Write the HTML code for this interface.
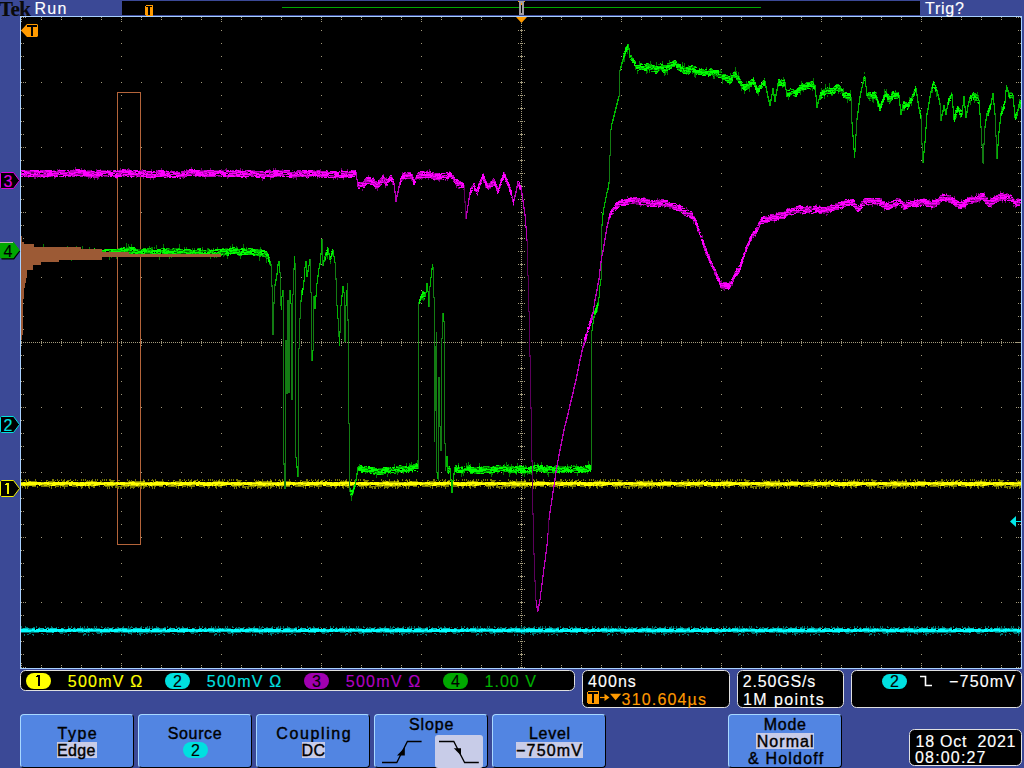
<!DOCTYPE html>
<html><head><meta charset="utf-8"><style>
html,body{margin:0;padding:0;}
body{width:1024px;height:768px;background:#3b4996;position:relative;overflow:hidden;font-family:"Liberation Sans",sans-serif;}
.a{position:absolute;white-space:pre;-webkit-text-stroke:0.15px currentColor;}
.k{-webkit-text-stroke:0.4px #000;}
.btn{position:absolute;top:714px;width:112px;height:52px;background:#5285e2;border-top:1px solid #a8d8ff;border-left:1px solid #a8d8ff;border-right:1px solid #000;border-bottom:1px solid #000;border-radius:4px;box-sizing:content-box;}
</style></head><body>
<svg width="1024" height="768" viewBox="0 0 1024 768" style="position:absolute;left:0;top:0" shape-rendering="crispEdges">
<defs><pattern id="py" patternUnits="userSpaceOnUse" x="21" y="479" width="127" height="11"><path fill="#ffff00" d="M2 3h2v1h-2zM6 3h14v1h-14zM23 3h5v1h-5zM32 3h15v1h-15zM48 3h9v1h-9zM59 3h4v1h-4zM64 3h16v1h-16zM83 3h9v1h-9zM95 3h3v1h-3zM99 3h5v1h-5zM108 3h6v1h-6zM0 4h127v1h-127zM0 5h16v1h-16zM17 5h4v1h-4zM26 5h2v1h-2zM31 5h13v1h-13zM48 5h3v1h-3zM52 5h13v1h-13zM67 5h3v1h-3zM73 5h11v1h-11zM86 5h8v1h-8zM96 5h8v1h-8zM110 5h8v1h-8zM120 5h3v1h-3zM124 5h3v1h-3zM2 6h2v1h-2zM18 6h1v1h-1zM30 6h4v1h-4zM48 6h3v1h-3zM55 6h8v1h-8zM64 6h1v1h-1zM66 6h2v1h-2zM72 6h3v1h-3zM107 6h1v1h-1zM115 6h2v1h-2z"/><path fill="#c4c400" d="M5 2h1v1h-1zM8 2h2v1h-2zM37 2h1v1h-1zM45 2h3v1h-3zM50 2h2v1h-2zM70 2h2v1h-2zM111 2h2v1h-2zM119 2h1v1h-1zM122 2h2v1h-2zM0 3h2v1h-2zM4 3h2v1h-2zM20 3h3v1h-3zM28 3h4v1h-4zM47 3h1v1h-1zM57 3h2v1h-2zM63 3h1v1h-1zM80 3h3v1h-3zM92 3h3v1h-3zM98 3h1v1h-1zM104 3h4v1h-4zM114 3h13v1h-13zM16 5h1v1h-1zM21 5h5v1h-5zM28 5h3v1h-3zM44 5h4v1h-4zM51 5h1v1h-1zM65 5h2v1h-2zM70 5h3v1h-3zM84 5h2v1h-2zM94 5h2v1h-2zM104 5h6v1h-6zM118 5h2v1h-2zM123 5h1v1h-1zM0 6h2v1h-2zM4 6h11v1h-11zM23 6h3v1h-3zM28 6h2v1h-2zM34 6h1v1h-1zM39 6h4v1h-4zM63 6h1v1h-1zM65 6h1v1h-1zM68 6h4v1h-4zM75 6h2v1h-2zM83 6h10v1h-10zM95 6h1v1h-1zM102 6h5v1h-5zM108 6h7v1h-7zM117 6h9v1h-9z"/><path fill="#787800" d="M0 0h1v1h-1zM4 0h1v1h-1zM7 0h1v1h-1zM14 0h1v1h-1zM31 0h2v1h-2zM36 0h1v1h-1zM40 0h1v1h-1zM43 0h1v1h-1zM49 0h1v1h-1zM54 0h1v1h-1zM60 0h1v1h-1zM62 0h1v1h-1zM64 0h1v1h-1zM71 0h1v1h-1zM74 0h1v1h-1zM76 0h1v1h-1zM81 0h1v1h-1zM83 0h1v1h-1zM85 0h1v1h-1zM88 0h2v1h-2zM106 0h1v1h-1zM114 0h1v1h-1zM122 0h1v1h-1zM0 1h1v1h-1zM3 1h3v1h-3zM7 1h1v1h-1zM14 1h1v1h-1zM20 1h1v1h-1zM25 1h2v1h-2zM31 1h2v1h-2zM34 1h1v1h-1zM36 1h1v1h-1zM38 1h1v1h-1zM40 1h1v1h-1zM42 1h2v1h-2zM46 1h4v1h-4zM52 1h1v1h-1zM54 1h1v1h-1zM56 1h1v1h-1zM60 1h1v1h-1zM62 1h1v1h-1zM64 1h1v1h-1zM66 1h1v1h-1zM68 1h1v1h-1zM70 1h2v1h-2zM74 1h1v1h-1zM76 1h1v1h-1zM79 1h1v1h-1zM81 1h1v1h-1zM83 1h1v1h-1zM85 1h1v1h-1zM88 1h6v1h-6zM97 1h2v1h-2zM106 1h1v1h-1zM108 1h1v1h-1zM110 1h1v1h-1zM114 1h1v1h-1zM119 1h1v1h-1zM122 1h2v1h-2zM7 2h1v1h-1zM10 2h6v1h-6zM25 2h1v1h-1zM27 2h7v1h-7zM41 2h3v1h-3zM65 2h5v1h-5zM72 2h4v1h-4zM79 2h2v1h-2zM89 2h4v1h-4zM107 2h4v1h-4zM113 2h6v1h-6zM120 2h2v1h-2zM19 6h4v1h-4zM26 6h2v1h-2zM35 6h4v1h-4zM43 6h4v1h-4zM51 6h4v1h-4zM77 6h2v1h-2zM93 6h2v1h-2zM100 6h2v1h-2zM1 7h1v1h-1zM3 7h2v1h-2zM6 7h2v1h-2zM11 7h4v1h-4zM16 7h1v1h-1zM20 7h9v1h-9zM30 7h1v1h-1zM34 7h4v1h-4zM39 7h1v1h-1zM41 7h6v1h-6zM51 7h6v1h-6zM59 7h3v1h-3zM64 7h1v1h-1zM67 7h2v1h-2zM70 7h4v1h-4zM78 7h1v1h-1zM82 7h1v1h-1zM84 7h5v1h-5zM90 7h2v1h-2zM94 7h14v1h-14zM109 7h12v1h-12zM122 7h5v1h-5zM1 8h1v1h-1zM4 8h1v1h-1zM6 8h1v1h-1zM16 8h1v1h-1zM28 8h1v1h-1zM30 8h1v1h-1zM34 8h1v1h-1zM39 8h1v1h-1zM43 8h1v1h-1zM56 8h1v1h-1zM60 8h2v1h-2zM67 8h2v1h-2zM72 8h2v1h-2zM86 8h1v1h-1zM88 8h1v1h-1zM91 8h1v1h-1zM94 8h4v1h-4zM99 8h2v1h-2zM103 8h1v1h-1zM105 8h1v1h-1zM109 8h5v1h-5zM117 8h1v1h-1zM120 8h1v1h-1zM122 8h2v1h-2zM4 9h1v1h-1zM6 9h1v1h-1zM30 9h1v1h-1zM43 9h1v1h-1zM60 9h1v1h-1zM68 9h1v1h-1zM86 9h1v1h-1zM88 9h1v1h-1zM97 9h1v1h-1zM99 9h2v1h-2zM103 9h1v1h-1zM109 9h1v1h-1zM112 9h1v1h-1zM120 9h1v1h-1zM122 9h1v1h-1z"/></pattern><pattern id="pc" patternUnits="userSpaceOnUse" x="21" y="626" width="131" height="11"><path fill="#00ffff" d="M0 3h7v1h-7zM11 3h3v1h-3zM15 3h4v1h-4zM22 3h4v1h-4zM27 3h16v1h-16zM46 3h3v1h-3zM50 3h2v1h-2zM53 3h1v1h-1zM55 3h7v1h-7zM65 3h7v1h-7zM75 3h6v1h-6zM82 3h5v1h-5zM88 3h3v1h-3zM93 3h7v1h-7zM101 3h5v1h-5zM110 3h19v1h-19zM0 4h131v1h-131zM0 5h10v1h-10zM13 5h23v1h-23zM37 5h5v1h-5zM44 5h6v1h-6zM52 5h3v1h-3zM61 5h1v1h-1zM63 5h3v1h-3zM67 5h1v1h-1zM79 5h10v1h-10zM90 5h7v1h-7zM102 5h9v1h-9zM112 5h16v1h-16zM130 5h1v1h-1z"/><path fill="#00c0c0" d="M2 2h6v1h-6zM11 2h3v1h-3zM17 2h6v1h-6zM25 2h3v1h-3zM29 2h7v1h-7zM40 2h2v1h-2zM47 2h3v1h-3zM52 2h2v1h-2zM56 2h6v1h-6zM67 2h2v1h-2zM70 2h1v1h-1zM74 2h1v1h-1zM83 2h1v1h-1zM88 2h4v1h-4zM97 2h9v1h-9zM112 2h9v1h-9zM124 2h2v1h-2zM128 2h1v1h-1zM7 3h4v1h-4zM19 3h3v1h-3zM43 3h3v1h-3zM49 3h1v1h-1zM52 3h1v1h-1zM54 3h1v1h-1zM62 3h3v1h-3zM72 3h3v1h-3zM81 3h1v1h-1zM87 3h1v1h-1zM91 3h2v1h-2zM100 3h1v1h-1zM106 3h4v1h-4zM10 5h3v1h-3zM36 5h1v1h-1zM42 5h2v1h-2zM50 5h2v1h-2zM55 5h6v1h-6zM62 5h1v1h-1zM66 5h1v1h-1zM68 5h11v1h-11zM89 5h1v1h-1zM97 5h5v1h-5zM111 5h1v1h-1zM128 5h2v1h-2zM31 6h2v1h-2zM79 6h2v1h-2zM107 6h1v1h-1zM116 6h1v1h-1z"/><path fill="#006e6e" d="M0 0h1v1h-1zM4 0h1v1h-1zM15 0h1v1h-1zM24 0h1v1h-1zM30 0h1v1h-1zM47 0h1v1h-1zM50 0h1v1h-1zM59 0h1v1h-1zM63 0h1v1h-1zM66 0h1v1h-1zM73 0h1v1h-1zM75 0h1v1h-1zM80 0h1v1h-1zM102 0h1v1h-1zM107 0h1v1h-1zM110 0h1v1h-1zM120 0h1v1h-1zM126 0h1v1h-1zM128 0h1v1h-1zM0 1h1v1h-1zM4 1h3v1h-3zM12 1h2v1h-2zM15 1h1v1h-1zM18 1h1v1h-1zM24 1h1v1h-1zM26 1h2v1h-2zM30 1h2v1h-2zM35 1h1v1h-1zM37 1h1v1h-1zM43 1h1v1h-1zM47 1h1v1h-1zM50 1h1v1h-1zM53 1h1v1h-1zM59 1h1v1h-1zM61 1h1v1h-1zM63 1h1v1h-1zM66 1h1v1h-1zM73 1h1v1h-1zM75 1h1v1h-1zM80 1h2v1h-2zM84 1h1v1h-1zM86 1h2v1h-2zM91 1h2v1h-2zM96 1h2v1h-2zM101 1h2v1h-2zM107 1h1v1h-1zM109 1h3v1h-3zM114 1h2v1h-2zM119 1h2v1h-2zM122 1h1v1h-1zM124 1h3v1h-3zM128 1h1v1h-1zM0 2h2v1h-2zM8 2h3v1h-3zM28 2h1v1h-1zM42 2h1v1h-1zM54 2h1v1h-1zM62 2h5v1h-5zM69 2h1v1h-1zM71 2h3v1h-3zM75 2h4v1h-4zM84 2h4v1h-4zM94 2h3v1h-3zM106 2h4v1h-4zM126 2h2v1h-2zM129 2h2v1h-2zM0 6h18v1h-18zM25 6h6v1h-6zM38 6h8v1h-8zM57 6h6v1h-6zM65 6h4v1h-4zM75 6h4v1h-4zM81 6h8v1h-8zM93 6h6v1h-6zM100 6h7v1h-7zM108 6h7v1h-7zM117 6h14v1h-14zM8 7h2v1h-2zM20 7h2v1h-2zM39 7h3v1h-3zM49 7h1v1h-1zM63 7h2v1h-2zM71 7h1v1h-1zM76 7h3v1h-3zM80 7h2v1h-2zM89 7h1v1h-1zM107 7h4v1h-4zM118 7h4v1h-4zM125 7h2v1h-2zM130 7h1v1h-1zM3 8h1v1h-1zM6 8h2v1h-2zM11 8h2v1h-2zM22 8h1v1h-1zM26 8h1v1h-1zM31 8h1v1h-1zM43 8h1v1h-1zM47 8h1v1h-1zM62 8h3v1h-3zM67 8h1v1h-1zM72 8h1v1h-1zM80 8h1v1h-1zM84 8h1v1h-1zM100 8h1v1h-1zM103 8h1v1h-1zM110 8h1v1h-1zM116 8h1v1h-1zM118 8h2v1h-2zM123 8h1v1h-1zM3 9h1v1h-1zM12 9h1v1h-1zM47 9h1v1h-1zM62 9h1v1h-1zM67 9h1v1h-1zM80 9h1v1h-1zM100 9h1v1h-1zM103 9h1v1h-1zM119 9h1v1h-1z"/></pattern><pattern id="pm" patternUnits="userSpaceOnUse" x="0" y="0" width="113" height="23"><path fill="#ff00ff" d="M0 0h3v1h-3zM10 0h3v1h-3zM18 0h2v1h-2zM26 0h9v1h-9zM42 0h16v1h-16zM60 0h2v1h-2zM70 0h13v1h-13zM89 0h2v1h-2zM98 0h4v1h-4zM108 0h3v1h-3zM0 1h3v1h-3zM5 1h2v1h-2zM9 1h3v1h-3zM22 1h5v1h-5zM30 1h1v1h-1zM34 1h2v1h-2zM42 1h2v1h-2zM49 1h4v1h-4zM56 1h3v1h-3zM63 1h9v1h-9zM73 1h9v1h-9zM88 1h12v1h-12zM2 2h2v1h-2zM14 2h2v1h-2zM21 2h2v1h-2zM35 2h7v1h-7zM54 2h2v1h-2zM67 2h2v1h-2zM71 2h10v1h-10zM88 2h5v1h-5zM95 2h3v1h-3zM99 2h4v1h-4zM109 2h3v1h-3zM0 3h12v1h-12zM24 3h4v1h-4zM30 3h6v1h-6zM40 3h3v1h-3zM47 3h1v1h-1zM50 3h5v1h-5zM61 3h2v1h-2zM66 3h3v1h-3zM71 3h3v1h-3zM86 3h3v1h-3zM94 3h1v1h-1zM102 3h3v1h-3zM108 3h5v1h-5zM12 4h4v1h-4zM18 4h3v1h-3zM24 4h10v1h-10zM39 4h8v1h-8zM49 4h2v1h-2zM60 4h3v1h-3zM66 4h8v1h-8zM78 4h2v1h-2zM90 4h6v1h-6zM5 5h1v1h-1zM14 5h2v1h-2zM22 5h3v1h-3zM28 5h3v1h-3zM57 5h17v1h-17zM77 5h5v1h-5zM85 5h3v1h-3zM106 5h5v1h-5zM3 6h5v1h-5zM10 6h18v1h-18zM39 6h3v1h-3zM54 6h10v1h-10zM66 6h7v1h-7zM77 6h13v1h-13zM91 6h8v1h-8zM103 6h5v1h-5zM0 7h5v1h-5zM14 7h1v1h-1zM17 7h4v1h-4zM26 7h2v1h-2zM39 7h12v1h-12zM53 7h11v1h-11zM68 7h5v1h-5zM87 7h3v1h-3zM98 7h4v1h-4zM107 7h3v1h-3zM112 7h1v1h-1zM0 8h6v1h-6zM9 8h2v1h-2zM17 8h5v1h-5zM32 8h6v1h-6zM46 8h5v1h-5zM56 8h2v1h-2zM61 8h5v1h-5zM68 8h5v1h-5zM76 8h10v1h-10zM88 8h6v1h-6zM106 8h3v1h-3zM1 9h4v1h-4zM9 9h4v1h-4zM16 9h2v1h-2zM21 9h4v1h-4zM30 9h10v1h-10zM45 9h8v1h-8zM58 9h7v1h-7zM67 9h3v1h-3zM76 9h11v1h-11zM94 9h7v1h-7zM106 9h2v1h-2zM0 10h10v1h-10zM12 10h8v1h-8zM22 10h5v1h-5zM34 10h9v1h-9zM46 10h10v1h-10zM78 10h8v1h-8zM91 10h3v1h-3zM101 10h9v1h-9zM10 11h7v1h-7zM25 11h4v1h-4zM38 11h3v1h-3zM49 11h3v1h-3zM59 11h2v1h-2zM77 11h3v1h-3zM83 11h7v1h-7zM95 11h6v1h-6zM106 11h7v1h-7zM3 12h2v1h-2zM16 12h5v1h-5zM27 12h4v1h-4zM47 12h5v1h-5zM53 12h4v1h-4zM61 12h5v1h-5zM69 12h3v1h-3zM73 12h2v1h-2zM83 12h1v1h-1zM92 12h2v1h-2zM100 12h6v1h-6zM109 12h4v1h-4zM10 13h15v1h-15zM30 13h8v1h-8zM48 13h5v1h-5zM71 13h2v1h-2zM83 13h8v1h-8zM96 13h7v1h-7zM108 13h5v1h-5zM2 14h6v1h-6zM10 14h4v1h-4zM28 14h3v1h-3zM33 14h1v1h-1zM41 14h2v1h-2zM47 14h8v1h-8zM63 14h8v1h-8zM74 14h6v1h-6zM82 14h12v1h-12zM96 14h6v1h-6zM110 14h3v1h-3zM2 15h7v1h-7zM11 15h14v1h-14zM28 15h6v1h-6zM38 15h2v1h-2zM41 15h8v1h-8zM54 15h5v1h-5zM61 15h5v1h-5zM76 15h1v1h-1zM91 15h1v1h-1zM108 15h5v1h-5zM0 16h5v1h-5zM9 16h13v1h-13zM26 16h16v1h-16zM49 16h4v1h-4zM56 16h10v1h-10zM77 16h15v1h-15zM98 16h12v1h-12zM0 17h1v1h-1zM6 17h5v1h-5zM17 17h8v1h-8zM28 17h7v1h-7zM37 17h3v1h-3zM43 17h1v1h-1zM48 17h3v1h-3zM53 17h5v1h-5zM60 17h8v1h-8zM73 17h1v1h-1zM87 17h3v1h-3zM97 17h6v1h-6zM107 17h6v1h-6zM2 18h4v1h-4zM9 18h4v1h-4zM21 18h4v1h-4zM47 18h15v1h-15zM92 18h4v1h-4zM104 18h1v1h-1zM4 19h4v1h-4zM13 19h1v1h-1zM20 19h5v1h-5zM28 19h5v1h-5zM39 19h1v1h-1zM43 19h1v1h-1zM50 19h3v1h-3zM74 19h2v1h-2zM81 19h4v1h-4zM86 19h7v1h-7zM95 19h3v1h-3zM106 19h6v1h-6zM9 20h5v1h-5zM38 20h2v1h-2zM49 20h22v1h-22zM74 20h4v1h-4zM89 20h2v1h-2zM94 20h3v1h-3zM102 20h6v1h-6zM111 20h2v1h-2zM0 21h3v1h-3zM7 21h3v1h-3zM11 21h3v1h-3zM16 21h5v1h-5zM32 21h4v1h-4zM39 21h5v1h-5zM46 21h3v1h-3zM55 21h7v1h-7zM67 21h11v1h-11zM88 21h2v1h-2zM104 21h3v1h-3zM112 21h1v1h-1zM0 22h17v1h-17zM22 22h8v1h-8zM47 22h1v1h-1zM56 22h8v1h-8zM68 22h3v1h-3zM74 22h2v1h-2zM81 22h16v1h-16zM100 22h2v1h-2z"/><path fill="#c000c0" d="M5 0h5v1h-5zM13 0h5v1h-5zM23 0h3v1h-3zM35 0h7v1h-7zM62 0h6v1h-6zM83 0h6v1h-6zM93 0h5v1h-5zM107 0h1v1h-1zM3 1h2v1h-2zM14 1h3v1h-3zM31 1h3v1h-3zM36 1h6v1h-6zM44 1h5v1h-5zM53 1h3v1h-3zM59 1h4v1h-4zM82 1h6v1h-6zM106 1h7v1h-7zM0 2h2v1h-2zM9 2h2v1h-2zM16 2h2v1h-2zM23 2h12v1h-12zM42 2h6v1h-6zM51 2h3v1h-3zM56 2h7v1h-7zM69 2h2v1h-2zM81 2h5v1h-5zM98 2h1v1h-1zM106 2h3v1h-3zM112 2h1v1h-1zM12 3h9v1h-9zM28 3h2v1h-2zM36 3h4v1h-4zM55 3h6v1h-6zM63 3h3v1h-3zM74 3h10v1h-10zM95 3h7v1h-7zM5 4h3v1h-3zM16 4h2v1h-2zM34 4h3v1h-3zM47 4h2v1h-2zM54 4h3v1h-3zM63 4h3v1h-3zM80 4h2v1h-2zM86 4h4v1h-4zM96 4h7v1h-7zM108 4h3v1h-3zM6 5h4v1h-4zM16 5h3v1h-3zM25 5h3v1h-3zM36 5h2v1h-2zM39 5h4v1h-4zM44 5h2v1h-2zM55 5h2v1h-2zM74 5h3v1h-3zM88 5h3v1h-3zM95 5h11v1h-11zM111 5h2v1h-2zM8 6h2v1h-2zM28 6h3v1h-3zM38 6h1v1h-1zM44 6h5v1h-5zM50 6h4v1h-4zM90 6h1v1h-1zM99 6h4v1h-4zM111 6h2v1h-2zM12 7h2v1h-2zM15 7h2v1h-2zM28 7h5v1h-5zM51 7h2v1h-2zM75 7h4v1h-4zM83 7h4v1h-4zM90 7h6v1h-6zM102 7h5v1h-5zM110 7h2v1h-2zM6 8h2v1h-2zM11 8h5v1h-5zM25 8h7v1h-7zM38 8h8v1h-8zM54 8h2v1h-2zM58 8h1v1h-1zM66 8h2v1h-2zM73 8h3v1h-3zM94 8h5v1h-5zM104 8h2v1h-2zM109 8h4v1h-4zM0 9h1v1h-1zM6 9h3v1h-3zM13 9h3v1h-3zM18 9h3v1h-3zM40 9h5v1h-5zM65 9h2v1h-2zM70 9h6v1h-6zM91 9h3v1h-3zM10 10h2v1h-2zM27 10h7v1h-7zM43 10h3v1h-3zM56 10h9v1h-9zM68 10h10v1h-10zM86 10h5v1h-5zM94 10h7v1h-7zM110 10h1v1h-1zM6 11h4v1h-4zM17 11h5v1h-5zM29 11h2v1h-2zM34 11h4v1h-4zM41 11h8v1h-8zM54 11h5v1h-5zM61 11h16v1h-16zM80 11h3v1h-3zM90 11h5v1h-5zM101 11h5v1h-5zM5 12h3v1h-3zM21 12h6v1h-6zM75 12h1v1h-1zM78 12h5v1h-5zM87 12h5v1h-5zM96 12h4v1h-4zM108 12h1v1h-1zM2 13h5v1h-5zM25 13h2v1h-2zM38 13h10v1h-10zM53 13h18v1h-18zM73 13h5v1h-5zM91 13h5v1h-5zM0 14h2v1h-2zM8 14h2v1h-2zM17 14h2v1h-2zM23 14h4v1h-4zM34 14h7v1h-7zM43 14h4v1h-4zM55 14h3v1h-3zM71 14h3v1h-3zM80 14h2v1h-2zM94 14h2v1h-2zM103 14h4v1h-4zM0 15h2v1h-2zM9 15h2v1h-2zM25 15h3v1h-3zM34 15h4v1h-4zM40 15h1v1h-1zM49 15h2v1h-2zM59 15h2v1h-2zM66 15h10v1h-10zM77 15h6v1h-6zM86 15h5v1h-5zM92 15h11v1h-11zM22 16h4v1h-4zM42 16h7v1h-7zM71 16h6v1h-6zM92 16h6v1h-6zM1 17h2v1h-2zM12 17h5v1h-5zM25 17h3v1h-3zM40 17h3v1h-3zM44 17h4v1h-4zM51 17h2v1h-2zM68 17h5v1h-5zM75 17h12v1h-12zM90 17h7v1h-7zM0 18h2v1h-2zM6 18h3v1h-3zM13 18h8v1h-8zM25 18h11v1h-11zM42 18h2v1h-2zM45 18h2v1h-2zM67 18h3v1h-3zM73 18h3v1h-3zM78 18h7v1h-7zM90 18h2v1h-2zM96 18h5v1h-5zM105 18h2v1h-2zM109 18h4v1h-4zM8 19h5v1h-5zM14 19h2v1h-2zM25 19h3v1h-3zM33 19h6v1h-6zM40 19h3v1h-3zM47 19h3v1h-3zM58 19h5v1h-5zM66 19h3v1h-3zM85 19h1v1h-1zM93 19h2v1h-2zM103 19h3v1h-3zM112 19h1v1h-1zM0 20h9v1h-9zM21 20h17v1h-17zM40 20h7v1h-7zM78 20h3v1h-3zM86 20h3v1h-3zM91 20h3v1h-3zM97 20h5v1h-5zM3 21h4v1h-4zM10 21h1v1h-1zM21 21h4v1h-4zM26 21h1v1h-1zM36 21h3v1h-3zM44 21h2v1h-2zM49 21h4v1h-4zM78 21h10v1h-10zM93 21h11v1h-11zM107 21h2v1h-2zM17 22h5v1h-5zM30 22h11v1h-11zM44 22h3v1h-3zM51 22h5v1h-5zM76 22h5v1h-5zM97 22h3v1h-3zM102 22h7v1h-7zM110 22h3v1h-3z"/><path fill="#700070" d="M3 0h2v1h-2zM20 0h3v1h-3zM58 0h2v1h-2zM68 0h2v1h-2zM91 0h2v1h-2zM104 0h3v1h-3zM111 0h2v1h-2zM7 1h2v1h-2zM12 1h2v1h-2zM17 1h5v1h-5zM27 1h3v1h-3zM100 1h6v1h-6zM11 2h3v1h-3zM18 2h3v1h-3zM48 2h3v1h-3zM63 2h4v1h-4zM93 2h2v1h-2zM103 2h3v1h-3zM43 3h4v1h-4zM48 3h2v1h-2zM69 3h2v1h-2zM89 3h5v1h-5zM0 4h5v1h-5zM37 4h2v1h-2zM57 4h3v1h-3zM74 4h4v1h-4zM82 4h4v1h-4zM103 4h5v1h-5zM111 4h2v1h-2zM0 5h5v1h-5zM10 5h4v1h-4zM31 5h5v1h-5zM43 5h1v1h-1zM51 5h4v1h-4zM82 5h3v1h-3zM91 5h4v1h-4zM31 6h3v1h-3zM37 6h1v1h-1zM42 6h2v1h-2zM64 6h2v1h-2zM73 6h4v1h-4zM108 6h3v1h-3zM5 7h7v1h-7zM21 7h5v1h-5zM33 7h6v1h-6zM73 7h2v1h-2zM96 7h2v1h-2zM16 8h1v1h-1zM51 8h3v1h-3zM59 8h2v1h-2zM86 8h2v1h-2zM99 8h5v1h-5zM5 9h1v1h-1zM25 9h5v1h-5zM53 9h5v1h-5zM87 9h4v1h-4zM101 9h5v1h-5zM108 9h5v1h-5zM20 10h2v1h-2zM0 11h6v1h-6zM31 11h3v1h-3zM52 11h2v1h-2zM8 12h8v1h-8zM31 12h9v1h-9zM43 12h4v1h-4zM52 12h1v1h-1zM66 12h3v1h-3zM76 12h2v1h-2zM94 12h2v1h-2zM106 12h2v1h-2zM7 13h3v1h-3zM27 13h3v1h-3zM78 13h5v1h-5zM14 14h3v1h-3zM19 14h4v1h-4zM27 14h1v1h-1zM31 14h2v1h-2zM102 14h1v1h-1zM107 14h3v1h-3zM51 15h3v1h-3zM83 15h3v1h-3zM104 15h4v1h-4zM5 16h4v1h-4zM53 16h3v1h-3zM66 16h5v1h-5zM110 16h3v1h-3zM11 17h1v1h-1zM35 17h2v1h-2zM58 17h2v1h-2zM74 17h1v1h-1zM36 18h6v1h-6zM44 18h1v1h-1zM62 18h3v1h-3zM70 18h3v1h-3zM76 18h2v1h-2zM85 18h5v1h-5zM101 18h3v1h-3zM0 19h4v1h-4zM16 19h4v1h-4zM44 19h3v1h-3zM53 19h5v1h-5zM63 19h3v1h-3zM69 19h5v1h-5zM14 20h7v1h-7zM47 20h2v1h-2zM71 20h3v1h-3zM81 20h5v1h-5zM14 21h2v1h-2zM25 21h1v1h-1zM27 21h5v1h-5zM53 21h2v1h-2zM62 21h4v1h-4zM90 21h3v1h-3zM109 21h3v1h-3zM41 22h3v1h-3zM64 22h4v1h-4zM109 22h1v1h-1z"/></pattern><pattern id="pg" patternUnits="userSpaceOnUse" x="0" y="0" width="109" height="29"><path fill="#00ff00" d="M6 0h2v1h-2zM13 0h9v1h-9zM32 0h1v1h-1zM36 0h4v1h-4zM50 0h9v1h-9zM61 0h5v1h-5zM89 0h3v1h-3zM97 0h6v1h-6zM9 1h5v1h-5zM18 1h1v1h-1zM22 1h6v1h-6zM33 1h8v1h-8zM42 1h13v1h-13zM58 1h5v1h-5zM66 1h8v1h-8zM88 1h3v1h-3zM98 1h10v1h-10zM4 2h4v1h-4zM12 2h2v1h-2zM20 2h3v1h-3zM34 2h1v1h-1zM39 2h7v1h-7zM57 2h1v1h-1zM78 2h3v1h-3zM83 2h16v1h-16zM101 2h6v1h-6zM3 3h6v1h-6zM19 3h1v1h-1zM25 3h2v1h-2zM32 3h6v1h-6zM41 3h5v1h-5zM55 3h5v1h-5zM63 3h8v1h-8zM74 3h1v1h-1zM78 3h4v1h-4zM91 3h7v1h-7zM99 3h1v1h-1zM104 3h5v1h-5zM8 4h2v1h-2zM11 4h9v1h-9zM21 4h2v1h-2zM31 4h4v1h-4zM43 4h3v1h-3zM58 4h4v1h-4zM66 4h1v1h-1zM74 4h2v1h-2zM81 4h15v1h-15zM102 4h6v1h-6zM0 5h10v1h-10zM19 5h3v1h-3zM31 5h10v1h-10zM44 5h8v1h-8zM55 5h7v1h-7zM67 5h5v1h-5zM82 5h3v1h-3zM92 5h2v1h-2zM100 5h3v1h-3zM107 5h1v1h-1zM0 6h3v1h-3zM7 6h4v1h-4zM17 6h11v1h-11zM32 6h6v1h-6zM42 6h8v1h-8zM54 6h7v1h-7zM65 6h4v1h-4zM70 6h8v1h-8zM80 6h10v1h-10zM93 6h7v1h-7zM13 7h8v1h-8zM22 7h5v1h-5zM33 7h14v1h-14zM58 7h6v1h-6zM73 7h3v1h-3zM78 7h2v1h-2zM84 7h12v1h-12zM100 7h2v1h-2zM107 7h2v1h-2zM2 8h2v1h-2zM12 8h4v1h-4zM21 8h6v1h-6zM33 8h5v1h-5zM48 8h1v1h-1zM51 8h8v1h-8zM61 8h2v1h-2zM64 8h3v1h-3zM79 8h11v1h-11zM95 8h4v1h-4zM108 8h1v1h-1zM3 9h6v1h-6zM12 9h3v1h-3zM17 9h7v1h-7zM26 9h3v1h-3zM32 9h2v1h-2zM41 9h3v1h-3zM45 9h3v1h-3zM69 9h1v1h-1zM96 9h3v1h-3zM102 9h2v1h-2zM108 9h1v1h-1zM0 10h4v1h-4zM7 10h3v1h-3zM12 10h1v1h-1zM15 10h2v1h-2zM19 10h2v1h-2zM26 10h4v1h-4zM32 10h5v1h-5zM50 10h4v1h-4zM58 10h10v1h-10zM73 10h2v1h-2zM80 10h1v1h-1zM83 10h4v1h-4zM89 10h4v1h-4zM101 10h3v1h-3zM15 11h6v1h-6zM22 11h2v1h-2zM34 11h6v1h-6zM45 11h3v1h-3zM50 11h7v1h-7zM60 11h3v1h-3zM69 11h1v1h-1zM75 11h3v1h-3zM90 11h1v1h-1zM94 11h2v1h-2zM97 11h5v1h-5zM4 12h1v1h-1zM8 12h9v1h-9zM20 12h2v1h-2zM25 12h3v1h-3zM29 12h4v1h-4zM39 12h7v1h-7zM59 12h6v1h-6zM68 12h10v1h-10zM84 12h1v1h-1zM87 12h1v1h-1zM99 12h3v1h-3zM0 13h4v1h-4zM7 13h2v1h-2zM26 13h1v1h-1zM32 13h16v1h-16zM51 13h14v1h-14zM75 13h4v1h-4zM90 13h4v1h-4zM99 13h2v1h-2zM5 14h8v1h-8zM19 14h5v1h-5zM41 14h4v1h-4zM46 14h4v1h-4zM51 14h3v1h-3zM56 14h9v1h-9zM70 14h5v1h-5zM78 14h5v1h-5zM84 14h2v1h-2zM91 14h8v1h-8zM0 15h11v1h-11zM14 15h3v1h-3zM20 15h13v1h-13zM35 15h5v1h-5zM47 15h2v1h-2zM51 15h3v1h-3zM71 15h6v1h-6zM83 15h5v1h-5zM92 15h8v1h-8zM101 15h3v1h-3zM106 15h2v1h-2zM11 16h4v1h-4zM21 16h4v1h-4zM30 16h3v1h-3zM41 16h7v1h-7zM49 16h2v1h-2zM54 16h3v1h-3zM64 16h1v1h-1zM74 16h3v1h-3zM81 16h4v1h-4zM91 16h7v1h-7zM106 16h3v1h-3zM0 17h7v1h-7zM9 17h3v1h-3zM15 17h5v1h-5zM22 17h5v1h-5zM33 17h4v1h-4zM48 17h4v1h-4zM54 17h4v1h-4zM68 17h4v1h-4zM74 17h7v1h-7zM84 17h8v1h-8zM94 17h2v1h-2zM105 17h4v1h-4zM2 18h2v1h-2zM12 18h7v1h-7zM24 18h5v1h-5zM32 18h1v1h-1zM34 18h4v1h-4zM43 18h9v1h-9zM53 18h4v1h-4zM74 18h2v1h-2zM81 18h2v1h-2zM84 18h2v1h-2zM95 18h2v1h-2zM100 18h9v1h-9zM2 19h8v1h-8zM30 19h7v1h-7zM42 19h10v1h-10zM57 19h10v1h-10zM71 19h3v1h-3zM84 19h2v1h-2zM8 20h3v1h-3zM15 20h6v1h-6zM23 20h11v1h-11zM41 20h3v1h-3zM53 20h12v1h-12zM68 20h6v1h-6zM75 20h3v1h-3zM81 20h11v1h-11zM98 20h4v1h-4zM7 21h10v1h-10zM22 21h2v1h-2zM26 21h2v1h-2zM32 21h4v1h-4zM43 21h3v1h-3zM49 21h3v1h-3zM55 21h4v1h-4zM63 21h4v1h-4zM77 21h5v1h-5zM90 21h9v1h-9zM103 21h3v1h-3zM0 22h1v1h-1zM2 22h3v1h-3zM10 22h2v1h-2zM19 22h11v1h-11zM34 22h3v1h-3zM38 22h2v1h-2zM42 22h3v1h-3zM49 22h11v1h-11zM71 22h3v1h-3zM78 22h5v1h-5zM101 22h2v1h-2zM106 22h3v1h-3zM1 23h2v1h-2zM7 23h4v1h-4zM16 23h2v1h-2zM29 23h8v1h-8zM48 23h10v1h-10zM61 23h7v1h-7zM82 23h14v1h-14zM2 24h2v1h-2zM6 24h2v1h-2zM12 24h5v1h-5zM20 24h2v1h-2zM27 24h1v1h-1zM34 24h2v1h-2zM59 24h11v1h-11zM71 24h11v1h-11zM84 24h2v1h-2zM94 24h12v1h-12zM0 25h4v1h-4zM18 25h3v1h-3zM35 25h5v1h-5zM44 25h3v1h-3zM50 25h6v1h-6zM63 25h2v1h-2zM68 25h3v1h-3zM79 25h1v1h-1zM95 25h14v1h-14zM0 26h2v1h-2zM7 26h5v1h-5zM16 26h3v1h-3zM20 26h12v1h-12zM44 26h4v1h-4zM52 26h18v1h-18zM80 26h4v1h-4zM88 26h6v1h-6zM95 26h5v1h-5zM107 26h2v1h-2zM0 27h5v1h-5zM8 27h17v1h-17zM30 27h14v1h-14zM47 27h2v1h-2zM54 27h6v1h-6zM63 27h4v1h-4zM72 27h14v1h-14zM87 27h3v1h-3zM92 27h2v1h-2zM104 27h4v1h-4zM0 28h2v1h-2zM7 28h7v1h-7zM27 28h6v1h-6zM39 28h15v1h-15zM55 28h1v1h-1zM64 28h2v1h-2zM71 28h3v1h-3zM83 28h1v1h-1zM89 28h4v1h-4zM100 28h4v1h-4zM106 28h2v1h-2z"/><path fill="#00c000" d="M0 0h6v1h-6zM8 0h2v1h-2zM29 0h3v1h-3zM33 0h3v1h-3zM40 0h5v1h-5zM59 0h2v1h-2zM66 0h1v1h-1zM69 0h2v1h-2zM76 0h3v1h-3zM86 0h3v1h-3zM92 0h5v1h-5zM105 0h4v1h-4zM0 1h3v1h-3zM6 1h3v1h-3zM19 1h3v1h-3zM41 1h1v1h-1zM55 1h3v1h-3zM77 1h11v1h-11zM91 1h7v1h-7zM108 1h1v1h-1zM2 2h2v1h-2zM8 2h4v1h-4zM28 2h6v1h-6zM35 2h4v1h-4zM46 2h8v1h-8zM67 2h3v1h-3zM75 2h3v1h-3zM81 2h2v1h-2zM107 2h2v1h-2zM0 3h3v1h-3zM9 3h6v1h-6zM17 3h2v1h-2zM20 3h5v1h-5zM30 3h2v1h-2zM46 3h2v1h-2zM52 3h3v1h-3zM60 3h2v1h-2zM71 3h3v1h-3zM75 3h3v1h-3zM82 3h9v1h-9zM98 3h1v1h-1zM100 3h4v1h-4zM2 4h2v1h-2zM10 4h1v1h-1zM20 4h1v1h-1zM23 4h1v1h-1zM28 4h3v1h-3zM35 4h5v1h-5zM46 4h5v1h-5zM55 4h3v1h-3zM62 4h2v1h-2zM71 4h3v1h-3zM76 4h1v1h-1zM80 4h1v1h-1zM96 4h3v1h-3zM108 4h1v1h-1zM13 5h3v1h-3zM26 5h2v1h-2zM52 5h3v1h-3zM72 5h1v1h-1zM85 5h2v1h-2zM94 5h4v1h-4zM103 5h4v1h-4zM108 5h1v1h-1zM28 6h4v1h-4zM38 6h4v1h-4zM61 6h4v1h-4zM78 6h2v1h-2zM100 6h9v1h-9zM0 7h3v1h-3zM7 7h6v1h-6zM27 7h2v1h-2zM50 7h6v1h-6zM57 7h1v1h-1zM68 7h5v1h-5zM76 7h2v1h-2zM80 7h3v1h-3zM102 7h5v1h-5zM0 8h2v1h-2zM4 8h8v1h-8zM16 8h5v1h-5zM28 8h5v1h-5zM40 8h4v1h-4zM49 8h2v1h-2zM70 8h9v1h-9zM90 8h5v1h-5zM99 8h9v1h-9zM0 9h3v1h-3zM9 9h3v1h-3zM15 9h2v1h-2zM24 9h2v1h-2zM34 9h3v1h-3zM40 9h1v1h-1zM44 9h1v1h-1zM48 9h11v1h-11zM63 9h6v1h-6zM70 9h8v1h-8zM80 9h3v1h-3zM93 9h3v1h-3zM107 9h1v1h-1zM4 10h3v1h-3zM17 10h2v1h-2zM30 10h2v1h-2zM40 10h1v1h-1zM45 10h5v1h-5zM54 10h4v1h-4zM68 10h3v1h-3zM81 10h2v1h-2zM87 10h2v1h-2zM93 10h8v1h-8zM0 11h5v1h-5zM7 11h8v1h-8zM24 11h4v1h-4zM32 11h2v1h-2zM48 11h2v1h-2zM57 11h2v1h-2zM68 11h1v1h-1zM83 11h7v1h-7zM96 11h1v1h-1zM104 11h3v1h-3zM17 12h3v1h-3zM33 12h3v1h-3zM46 12h5v1h-5zM56 12h3v1h-3zM65 12h3v1h-3zM90 12h4v1h-4zM102 12h3v1h-3zM9 13h4v1h-4zM18 13h8v1h-8zM27 13h3v1h-3zM48 13h3v1h-3zM85 13h5v1h-5zM101 13h8v1h-8zM0 14h4v1h-4zM16 14h3v1h-3zM26 14h15v1h-15zM45 14h1v1h-1zM50 14h1v1h-1zM54 14h2v1h-2zM67 14h3v1h-3zM99 14h3v1h-3zM33 15h2v1h-2zM40 15h7v1h-7zM49 15h2v1h-2zM54 15h4v1h-4zM61 15h4v1h-4zM79 15h4v1h-4zM91 15h1v1h-1zM104 15h2v1h-2zM108 15h1v1h-1zM0 16h6v1h-6zM15 16h1v1h-1zM17 16h4v1h-4zM25 16h5v1h-5zM33 16h8v1h-8zM51 16h3v1h-3zM57 16h3v1h-3zM69 16h5v1h-5zM79 16h2v1h-2zM89 16h2v1h-2zM98 16h3v1h-3zM7 17h2v1h-2zM12 17h2v1h-2zM20 17h2v1h-2zM27 17h2v1h-2zM37 17h3v1h-3zM42 17h2v1h-2zM63 17h1v1h-1zM72 17h2v1h-2zM81 17h3v1h-3zM92 17h2v1h-2zM99 17h2v1h-2zM104 17h1v1h-1zM4 18h8v1h-8zM19 18h3v1h-3zM33 18h1v1h-1zM38 18h5v1h-5zM52 18h1v1h-1zM57 18h3v1h-3zM67 18h2v1h-2zM76 18h5v1h-5zM83 18h1v1h-1zM86 18h2v1h-2zM90 18h5v1h-5zM0 19h2v1h-2zM11 19h8v1h-8zM23 19h3v1h-3zM28 19h2v1h-2zM37 19h5v1h-5zM52 19h5v1h-5zM67 19h4v1h-4zM74 19h2v1h-2zM80 19h4v1h-4zM89 19h3v1h-3zM99 19h6v1h-6zM0 20h3v1h-3zM12 20h3v1h-3zM21 20h2v1h-2zM36 20h5v1h-5zM47 20h2v1h-2zM74 20h1v1h-1zM78 20h3v1h-3zM92 20h2v1h-2zM102 20h1v1h-1zM0 21h1v1h-1zM4 21h1v1h-1zM17 21h5v1h-5zM28 21h4v1h-4zM41 21h2v1h-2zM46 21h3v1h-3zM53 21h2v1h-2zM59 21h4v1h-4zM67 21h5v1h-5zM82 21h8v1h-8zM106 21h3v1h-3zM1 22h1v1h-1zM5 22h5v1h-5zM12 22h7v1h-7zM30 22h4v1h-4zM37 22h1v1h-1zM40 22h2v1h-2zM48 22h1v1h-1zM60 22h9v1h-9zM74 22h4v1h-4zM88 22h13v1h-13zM103 22h3v1h-3zM0 23h1v1h-1zM3 23h2v1h-2zM11 23h5v1h-5zM21 23h8v1h-8zM39 23h7v1h-7zM58 23h3v1h-3zM73 23h5v1h-5zM101 23h8v1h-8zM0 24h2v1h-2zM8 24h4v1h-4zM22 24h5v1h-5zM30 24h4v1h-4zM36 24h23v1h-23zM82 24h2v1h-2zM86 24h4v1h-4zM11 25h7v1h-7zM21 25h3v1h-3zM30 25h5v1h-5zM42 25h2v1h-2zM56 25h2v1h-2zM65 25h3v1h-3zM75 25h2v1h-2zM82 25h5v1h-5zM2 26h5v1h-5zM12 26h4v1h-4zM35 26h7v1h-7zM48 26h2v1h-2zM70 26h10v1h-10zM85 26h3v1h-3zM94 26h1v1h-1zM100 26h5v1h-5zM5 27h3v1h-3zM25 27h1v1h-1zM44 27h3v1h-3zM49 27h5v1h-5zM67 27h5v1h-5zM86 27h1v1h-1zM90 27h2v1h-2zM94 27h10v1h-10zM4 28h3v1h-3zM14 28h1v1h-1zM18 28h3v1h-3zM25 28h2v1h-2zM34 28h2v1h-2zM37 28h2v1h-2zM56 28h5v1h-5zM63 28h1v1h-1zM66 28h5v1h-5zM74 28h9v1h-9zM93 28h7v1h-7zM104 28h2v1h-2zM108 28h1v1h-1z"/><path fill="#006e00" d="M22 0h7v1h-7zM45 0h1v1h-1zM48 0h2v1h-2zM67 0h2v1h-2zM71 0h5v1h-5zM79 0h4v1h-4zM103 0h2v1h-2zM3 1h3v1h-3zM28 1h5v1h-5zM63 1h3v1h-3zM74 1h3v1h-3zM0 2h2v1h-2zM14 2h6v1h-6zM23 2h5v1h-5zM54 2h3v1h-3zM58 2h9v1h-9zM70 2h5v1h-5zM15 3h2v1h-2zM38 3h3v1h-3zM48 3h4v1h-4zM62 3h1v1h-1zM0 4h2v1h-2zM4 4h4v1h-4zM40 4h3v1h-3zM51 4h4v1h-4zM64 4h2v1h-2zM67 4h4v1h-4zM77 4h3v1h-3zM99 4h3v1h-3zM10 5h3v1h-3zM16 5h3v1h-3zM22 5h4v1h-4zM28 5h3v1h-3zM41 5h3v1h-3zM62 5h5v1h-5zM78 5h4v1h-4zM98 5h2v1h-2zM3 6h4v1h-4zM11 6h6v1h-6zM50 6h4v1h-4zM69 6h1v1h-1zM21 7h1v1h-1zM47 7h3v1h-3zM27 8h1v1h-1zM38 8h2v1h-2zM44 8h4v1h-4zM59 8h2v1h-2zM63 8h1v1h-1zM67 8h3v1h-3zM29 9h3v1h-3zM37 9h3v1h-3zM61 9h2v1h-2zM78 9h2v1h-2zM83 9h10v1h-10zM99 9h3v1h-3zM104 9h3v1h-3zM13 10h2v1h-2zM21 10h5v1h-5zM37 10h3v1h-3zM71 10h2v1h-2zM75 10h5v1h-5zM104 10h5v1h-5zM5 11h2v1h-2zM28 11h4v1h-4zM40 11h2v1h-2zM63 11h5v1h-5zM70 11h2v1h-2zM78 11h5v1h-5zM102 11h2v1h-2zM107 11h2v1h-2zM0 12h4v1h-4zM5 12h3v1h-3zM22 12h3v1h-3zM28 12h1v1h-1zM36 12h3v1h-3zM51 12h5v1h-5zM82 12h2v1h-2zM85 12h2v1h-2zM88 12h2v1h-2zM4 13h3v1h-3zM13 13h5v1h-5zM30 13h2v1h-2zM65 13h10v1h-10zM79 13h6v1h-6zM94 13h5v1h-5zM4 14h1v1h-1zM13 14h3v1h-3zM24 14h2v1h-2zM65 14h2v1h-2zM75 14h3v1h-3zM83 14h1v1h-1zM11 15h3v1h-3zM17 15h3v1h-3zM58 15h3v1h-3zM70 15h1v1h-1zM77 15h2v1h-2zM88 15h3v1h-3zM100 15h1v1h-1zM6 16h5v1h-5zM16 16h1v1h-1zM48 16h1v1h-1zM60 16h4v1h-4zM65 16h4v1h-4zM85 16h4v1h-4zM104 16h2v1h-2zM14 17h1v1h-1zM29 17h4v1h-4zM40 17h2v1h-2zM58 17h5v1h-5zM64 17h4v1h-4zM96 17h3v1h-3zM0 18h2v1h-2zM29 18h3v1h-3zM60 18h7v1h-7zM69 18h5v1h-5zM88 18h2v1h-2zM97 18h3v1h-3zM10 19h1v1h-1zM19 19h4v1h-4zM26 19h2v1h-2zM76 19h4v1h-4zM86 19h3v1h-3zM92 19h7v1h-7zM3 20h5v1h-5zM11 20h1v1h-1zM49 20h4v1h-4zM65 20h3v1h-3zM103 20h6v1h-6zM1 21h3v1h-3zM5 21h2v1h-2zM24 21h2v1h-2zM36 21h5v1h-5zM72 21h5v1h-5zM99 21h4v1h-4zM45 22h3v1h-3zM83 22h5v1h-5zM5 23h2v1h-2zM18 23h3v1h-3zM37 23h2v1h-2zM46 23h2v1h-2zM68 23h5v1h-5zM78 23h4v1h-4zM96 23h5v1h-5zM4 24h2v1h-2zM17 24h3v1h-3zM28 24h2v1h-2zM106 24h3v1h-3zM4 25h7v1h-7zM24 25h6v1h-6zM47 25h3v1h-3zM58 25h5v1h-5zM71 25h4v1h-4zM77 25h2v1h-2zM92 25h3v1h-3zM19 26h1v1h-1zM32 26h3v1h-3zM42 26h2v1h-2zM50 26h2v1h-2zM26 27h4v1h-4zM60 27h3v1h-3zM2 28h2v1h-2zM15 28h3v1h-3zM21 28h4v1h-4zM33 28h1v1h-1zM36 28h1v1h-1zM84 28h5v1h-5z"/></pattern></defs>
<rect x="122" y="1" width="798" height="14" fill="#000"/>
<rect x="282" y="7" width="479" height="1" fill="#00a800"/>
<rect x="20" y="16" width="1002" height="653" fill="#a8d0ff"/>
<rect x="21" y="17" width="1000" height="651" fill="#000"/>
<g stroke="#a39a7c" stroke-width="1" fill="none"><path d="M121.5 17V668" stroke-dasharray="1 12"/><path d="M221.5 17V668" stroke-dasharray="1 12"/><path d="M321.5 17V668" stroke-dasharray="1 12"/><path d="M421.5 17V668" stroke-dasharray="1 12"/><path d="M521.5 17V668" stroke-dasharray="1 1"/><path d="M621.5 17V668" stroke-dasharray="1 12"/><path d="M721.5 17V668" stroke-dasharray="1 12"/><path d="M821.5 17V668" stroke-dasharray="1 12"/><path d="M921.5 17V668" stroke-dasharray="1 12"/><path d="M21 17.5H1021" stroke-dasharray="1 19"/><path d="M21 82.5H1021" stroke-dasharray="1 19"/><path d="M21 147.5H1021" stroke-dasharray="1 19"/><path d="M21 212.5H1021" stroke-dasharray="1 19"/><path d="M21 277.5H1021" stroke-dasharray="1 19"/><path d="M21 342.5H1021" stroke-dasharray="1 1"/><path d="M21 407.5H1021" stroke-dasharray="1 19"/><path d="M21 472.5H1021" stroke-dasharray="1 19"/><path d="M21 537.5H1021" stroke-dasharray="1 19"/><path d="M21 602.5H1021" stroke-dasharray="1 19"/><path d="M21 667.5H1021" stroke-dasharray="1 19"/><path d="M21.5 17V668" stroke-dasharray="1 12"/><path d="M23.5 17V668" stroke-dasharray="1 12"/><path d="M1018.5 17V668" stroke-dasharray="1 12"/><path d="M1020.5 17V668" stroke-dasharray="1 12"/><path d="M21 17.5H1021" stroke-dasharray="1 19"/><path d="M21 19.5H1021" stroke-dasharray="1 19"/><path d="M21 665.5H1021" stroke-dasharray="1 19"/><path d="M21 667.5H1021" stroke-dasharray="1 19"/><path d="M21 21.5H1021" stroke-dasharray="1 99"/><path d="M21 663.5H1021" stroke-dasharray="1 99"/><path d="M25.5 17V668" stroke-dasharray="1 64"/><path d="M1016.5 17V668" stroke-dasharray="1 64"/><path d="M518.5 17V668" stroke-dasharray="1 12"/><path d="M520.5 17V668" stroke-dasharray="1 12"/><path d="M521.5 17V668" stroke-dasharray="1 12"/><path d="M522.5 17V668" stroke-dasharray="1 12"/><path d="M524.5 17V668" stroke-dasharray="1 12"/><path d="M21 339.5H1021" stroke-dasharray="1 19"/><path d="M21 341.5H1021" stroke-dasharray="1 19"/><path d="M21 343.5H1021" stroke-dasharray="1 19"/><path d="M21 345.5H1021" stroke-dasharray="1 19"/></g>
<path fill="none" stroke="#b4643a" stroke-width="1" d="M117.5 92.5H140.5V544.5H117.5Z"/>
<rect x="21" y="479" width="1000" height="11" fill="url(#py)"/>
<rect x="21" y="626" width="1000" height="11" fill="url(#pc)"/>
<path fill="#007a00" d="M27 255h1V256h-1zM29 246h1V248h-1zM30 254h1V258h-1zM32 256h1V257h-1zM34 255h1V258h-1zM37 247h1V248h-1zM43 244h1V248h-1zM44 255h1V256h-1zM47 256h1V260h-1zM49 247h1V250h-1zM65 248h1V249h-1zM66 248h1V250h-1zM67 246h1V250h-1zM69 248h1V250h-1zM71 257h1V261h-1zM73 257h1V259h-1zM74 247h1V249h-1zM76 246h1V249h-1zM78 255h1V259h-1zM82 246h1V250h-1zM89 247h1V250h-1zM92 256h1V260h-1zM94 256h1V259h-1zM95 256h1V259h-1zM109 257h1V260h-1zM111 255h1V258h-1zM116 256h1V259h-1zM119 255h1V257h-1zM120 255h1V256h-1zM126 243h1V247h-1zM128 244h1V247h-1zM129 246h1V247h-1zM131 244h1V247h-1zM138 256h1V257h-1zM149 246h1V248h-1zM151 247h1V249h-1zM152 247h1V249h-1zM154 247h1V249h-1zM156 245h1V249h-1zM159 256h1V260h-1zM163 244h1V248h-1zM169 255h1V259h-1zM171 255h1V258h-1zM179 244h1V248h-1zM184 247h1V249h-1zM186 247h1V249h-1zM192 248h1V251h-1zM194 248h1V250h-1zM202 247h1V249h-1zM207 248h1V250h-1zM208 248h1V249h-1zM210 256h1V259h-1zM211 249h1V250h-1zM213 248h1V249h-1zM214 255h1V258h-1zM216 256h1V258h-1zM217 247h1V249h-1zM223 254h1V257h-1zM226 255h1V256h-1zM227 256h1V259h-1zM230 246h1V248h-1zM232 244h1V247h-1zM236 246h1V248h-1zM240 256h1V259h-1zM243 244h1V248h-1zM246 247h1V248h-1zM259 257h1V261h-1zM260 247h1V249h-1zM266 259h1V263h-1zM325 260h1V261h-1zM327 255h1V259h-1zM330 263h1V264h-1zM351 497h1V501h-1zM359 464h1V465h-1zM365 473h1V474h-1zM373 474h1V475h-1zM376 474h1V478h-1zM383 473h1V475h-1zM387 474h1V477h-1zM394 464h1V467h-1zM397 472h1V475h-1zM400 472h1V473h-1zM403 473h1V474h-1zM406 463h1V466h-1zM409 463h1V465h-1zM410 464h1V465h-1zM411 462h1V465h-1zM412 472h1V473h-1zM417 460h1V464h-1zM421 299h1V300h-1zM422 298h1V300h-1zM423 297h1V301h-1zM424 299h1V300h-1zM448 466h1V468h-1zM449 472h1V473h-1zM458 463h1V465h-1zM461 473h1V477h-1zM462 473h1V474h-1zM463 473h1V476h-1zM466 463h1V466h-1zM468 462h1V465h-1zM470 464h1V466h-1zM479 463h1V466h-1zM481 466h1V467h-1zM489 466h1V468h-1zM491 473h1V477h-1zM492 473h1V475h-1zM497 472h1V474h-1zM498 472h1V473h-1zM503 471h1V475h-1zM504 464h1V466h-1zM506 462h1V466h-1zM508 464h1V466h-1zM509 473h1V477h-1zM510 473h1V474h-1zM511 464h1V466h-1zM516 474h1V475h-1zM517 463h1V466h-1zM520 473h1V474h-1zM522 473h1V476h-1zM523 465h1V466h-1zM524 474h1V477h-1zM525 465h1V467h-1zM526 466h1V467h-1zM527 474h1V475h-1zM530 472h1V474h-1zM531 473h1V475h-1zM532 462h1V466h-1zM533 465h1V466h-1zM534 462h1V465h-1zM536 472h1V474h-1zM537 463h1V465h-1zM538 464h1V465h-1zM541 462h1V465h-1zM547 472h1V475h-1zM548 473h1V477h-1zM553 473h1V474h-1zM555 465h1V467h-1zM558 465h1V466h-1zM559 473h1V474h-1zM567 464h1V466h-1zM576 464h1V466h-1zM577 473h1V476h-1zM584 472h1V473h-1zM587 472h1V474h-1zM588 461h1V465h-1zM597 309h1V312h-1zM623 60h1V62h-1zM624 58h1V62h-1zM625 54h1V56h-1zM627 50h1V54h-1zM635 67h1V70h-1zM637 71h1V74h-1zM639 61h1V65h-1zM646 71h1V74h-1zM647 70h1V73h-1zM649 71h1V73h-1zM650 61h1V65h-1zM656 62h1V66h-1zM662 61h1V64h-1zM664 73h1V76h-1zM665 72h1V75h-1zM666 71h1V73h-1zM667 71h1V75h-1zM669 60h1V63h-1zM682 62h1V65h-1zM684 63h1V67h-1zM686 74h1V75h-1zM688 65h1V67h-1zM692 72h1V74h-1zM694 73h1V77h-1zM695 74h1V78h-1zM706 67h1V69h-1zM713 77h1V79h-1zM714 77h1V79h-1zM720 69h1V71h-1zM722 80h1V84h-1zM729 84h1V85h-1zM730 73h1V77h-1zM732 73h1V74h-1zM735 67h1V71h-1zM736 71h1V73h-1zM738 72h1V76h-1zM739 76h1V78h-1zM741 87h1V91h-1zM744 91h1V94h-1zM746 81h1V83h-1zM747 89h1V90h-1zM749 88h1V92h-1zM752 84h1V85h-1zM758 93h1V96h-1zM782 87h1V88h-1zM783 77h1V80h-1zM788 96h1V100h-1zM800 91h1V95h-1zM801 81h1V84h-1zM803 90h1V92h-1zM806 88h1V90h-1zM810 88h1V90h-1zM812 88h1V91h-1zM813 78h1V82h-1zM821 88h1V92h-1zM824 96h1V99h-1zM825 84h1V88h-1zM827 95h1V97h-1zM829 83h1V87h-1zM838 92h1V94h-1zM840 93h1V94h-1zM843 88h1V91h-1zM847 99h1V103h-1zM850 90h1V94h-1zM864 72h1V74h-1zM869 99h1V101h-1zM870 100h1V101h-1zM872 99h1V102h-1zM873 99h1V103h-1zM875 98h1V100h-1zM876 92h1V94h-1zM877 104h1V107h-1zM884 89h1V93h-1zM886 89h1V92h-1zM887 100h1V102h-1zM889 95h1V96h-1zM891 92h1V94h-1zM895 90h1V91h-1zM903 109h1V111h-1zM904 109h1V111h-1zM909 97h1V100h-1zM911 103h1V106h-1zM932 91h1V93h-1zM936 93h1V97h-1zM955 119h1V120h-1zM956 115h1V118h-1zM960 117h1V118h-1zM970 101h1V105h-1zM974 99h1V103h-1zM977 92h1V95h-1zM978 95h1V96h-1zM1001 106h1V110h-1zM1019 99h1V101h-1z"/><path fill="url(#pg)" d="M21 249h1V255h-1zM22 248h1V255h-1zM23 248h1V255h-1zM24 249h1V254h-1zM25 248h1V255h-1zM26 248h1V254h-1zM27 248h1V255h-1zM28 248h1V255h-1zM29 248h1V255h-1zM30 248h1V254h-1zM31 249h1V254h-1zM32 249h1V256h-1zM33 249h1V255h-1zM34 248h1V255h-1zM35 248h1V254h-1zM36 248h1V255h-1zM37 248h1V255h-1zM38 248h1V254h-1zM39 250h1V256h-1zM40 250h1V256h-1zM41 248h1V256h-1zM42 249h1V254h-1zM43 248h1V255h-1zM44 248h1V255h-1zM45 248h1V255h-1zM46 248h1V255h-1zM47 249h1V256h-1zM48 249h1V256h-1zM49 250h1V256h-1zM50 250h1V256h-1zM51 249h1V256h-1zM52 249h1V256h-1zM53 249h1V256h-1zM54 249h1V256h-1zM55 249h1V255h-1zM56 250h1V257h-1zM57 250h1V257h-1zM58 251h1V257h-1zM59 250h1V257h-1zM60 249h1V257h-1zM61 249h1V256h-1zM62 249h1V256h-1zM63 249h1V256h-1zM64 250h1V255h-1zM65 249h1V257h-1zM66 250h1V257h-1zM67 250h1V257h-1zM68 251h1V257h-1zM69 250h1V257h-1zM70 250h1V257h-1zM71 250h1V257h-1zM72 250h1V256h-1zM73 250h1V257h-1zM74 249h1V256h-1zM75 249h1V256h-1zM76 249h1V255h-1zM77 249h1V256h-1zM78 249h1V255h-1zM79 249h1V256h-1zM80 249h1V256h-1zM81 249h1V255h-1zM82 250h1V256h-1zM83 249h1V256h-1zM84 249h1V256h-1zM85 250h1V257h-1zM86 250h1V257h-1zM87 250h1V257h-1zM88 250h1V257h-1zM89 250h1V257h-1zM90 249h1V257h-1zM91 249h1V256h-1zM92 249h1V256h-1zM93 249h1V255h-1zM94 248h1V256h-1zM95 250h1V256h-1zM96 249h1V256h-1zM97 249h1V256h-1zM98 249h1V256h-1zM99 249h1V256h-1zM100 249h1V256h-1zM101 249h1V256h-1zM102 249h1V257h-1zM103 250h1V256h-1zM104 249h1V256h-1zM105 249h1V256h-1zM106 249h1V256h-1zM107 249h1V255h-1zM108 249h1V256h-1zM109 249h1V257h-1zM110 249h1V255h-1zM111 249h1V255h-1zM112 249h1V256h-1zM113 249h1V256h-1zM114 249h1V256h-1zM115 249h1V256h-1zM116 249h1V256h-1zM117 249h1V256h-1zM118 248h1V256h-1zM119 248h1V255h-1zM120 248h1V255h-1zM121 247h1V253h-1zM122 248h1V254h-1zM123 247h1V254h-1zM124 247h1V254h-1zM125 248h1V254h-1zM126 247h1V253h-1zM127 247h1V254h-1zM128 247h1V254h-1zM129 247h1V254h-1zM130 247h1V254h-1zM131 247h1V254h-1zM132 247h1V254h-1zM133 247h1V254h-1zM134 247h1V255h-1zM135 248h1V255h-1zM136 249h1V256h-1zM137 249h1V256h-1zM138 249h1V256h-1zM139 249h1V255h-1zM140 249h1V256h-1zM141 249h1V256h-1zM142 249h1V255h-1zM143 248h1V256h-1zM144 248h1V254h-1zM145 248h1V255h-1zM146 249h1V255h-1zM147 248h1V255h-1zM148 248h1V255h-1zM149 248h1V255h-1zM150 248h1V256h-1zM151 249h1V256h-1zM152 249h1V256h-1zM153 249h1V256h-1zM154 249h1V256h-1zM155 249h1V256h-1zM156 249h1V256h-1zM157 249h1V256h-1zM158 249h1V256h-1zM159 249h1V256h-1zM160 249h1V256h-1zM161 248h1V256h-1zM162 248h1V255h-1zM163 248h1V255h-1zM164 248h1V255h-1zM165 249h1V255h-1zM166 248h1V255h-1zM167 248h1V255h-1zM168 248h1V255h-1zM169 248h1V255h-1zM170 249h1V255h-1zM171 249h1V255h-1zM172 248h1V255h-1zM173 248h1V254h-1zM174 248h1V255h-1zM175 248h1V254h-1zM176 247h1V255h-1zM177 247h1V254h-1zM178 247h1V254h-1zM179 248h1V255h-1zM180 249h1V256h-1zM181 249h1V255h-1zM182 249h1V255h-1zM183 250h1V255h-1zM184 249h1V256h-1zM185 249h1V256h-1zM186 249h1V255h-1zM187 249h1V256h-1zM188 249h1V256h-1zM189 249h1V256h-1zM190 249h1V257h-1zM191 250h1V257h-1zM192 251h1V256h-1zM193 250h1V257h-1zM194 250h1V257h-1zM195 250h1V257h-1zM196 250h1V257h-1zM197 248h1V255h-1zM198 248h1V255h-1zM199 248h1V255h-1zM200 248h1V255h-1zM201 250h1V256h-1zM202 249h1V257h-1zM203 250h1V257h-1zM204 250h1V257h-1zM205 250h1V257h-1zM206 250h1V257h-1zM207 250h1V256h-1zM208 249h1V256h-1zM209 249h1V256h-1zM210 249h1V256h-1zM211 250h1V256h-1zM212 248h1V256h-1zM213 249h1V256h-1zM214 250h1V255h-1zM215 249h1V256h-1zM216 249h1V256h-1zM217 249h1V256h-1zM218 249h1V256h-1zM219 249h1V256h-1zM220 249h1V255h-1zM221 249h1V256h-1zM222 248h1V255h-1zM223 248h1V254h-1zM224 249h1V256h-1zM225 248h1V255h-1zM226 248h1V255h-1zM227 248h1V256h-1zM228 249h1V256h-1zM229 248h1V254h-1zM230 248h1V255h-1zM231 248h1V254h-1zM232 247h1V254h-1zM233 247h1V254h-1zM234 247h1V254h-1zM235 248h1V254h-1zM236 248h1V254h-1zM237 247h1V255h-1zM238 249h1V256h-1zM239 249h1V256h-1zM240 249h1V256h-1zM241 248h1V256h-1zM242 248h1V255h-1zM243 248h1V255h-1zM244 248h1V255h-1zM245 249h1V255h-1zM246 248h1V255h-1zM247 249h1V255h-1zM248 248h1V255h-1zM249 248h1V255h-1zM250 248h1V255h-1zM251 248h1V255h-1zM252 248h1V255h-1zM253 249h1V256h-1zM254 249h1V256h-1zM255 249h1V256h-1zM256 249h1V256h-1zM257 249h1V256h-1zM258 249h1V256h-1zM259 249h1V257h-1zM260 249h1V257h-1zM261 249h1V256h-1zM262 250h1V257h-1zM263 250h1V257h-1zM264 250h1V257h-1zM265 251h1V258h-1zM266 251h1V259h-1zM267 252h1V259h-1zM268 254h1V262h-1zM269 257h1V265h-1zM302 287h1V295h-1zM325 252h1V260h-1zM326 250h1V257h-1zM327 247h1V255h-1zM330 256h1V263h-1zM331 251h1V259h-1zM332 249h1V256h-1zM350 488h1V496h-1zM351 490h1V497h-1zM352 489h1V496h-1zM353 487h1V494h-1zM354 484h1V490h-1zM358 466h1V472h-1zM359 465h1V471h-1zM360 465h1V471h-1zM361 465h1V473h-1zM362 466h1V473h-1zM363 467h1V472h-1zM364 466h1V472h-1zM365 466h1V473h-1zM366 466h1V473h-1zM367 467h1V473h-1zM368 466h1V472h-1zM369 466h1V473h-1zM370 467h1V474h-1zM371 467h1V474h-1zM372 467h1V473h-1zM373 467h1V474h-1zM374 467h1V475h-1zM375 468h1V474h-1zM376 468h1V474h-1zM377 469h1V475h-1zM378 468h1V475h-1zM379 468h1V475h-1zM380 468h1V475h-1zM381 468h1V475h-1zM382 468h1V475h-1zM383 467h1V473h-1zM384 467h1V474h-1zM385 467h1V474h-1zM386 467h1V474h-1zM387 467h1V474h-1zM388 467h1V474h-1zM389 467h1V473h-1zM390 467h1V474h-1zM391 468h1V473h-1zM392 467h1V473h-1zM393 467h1V473h-1zM394 467h1V474h-1zM395 468h1V474h-1zM396 466h1V473h-1zM397 466h1V472h-1zM398 466h1V473h-1zM399 465h1V472h-1zM400 465h1V472h-1zM401 465h1V472h-1zM402 466h1V473h-1zM403 466h1V473h-1zM404 466h1V472h-1zM405 466h1V472h-1zM406 466h1V473h-1zM407 467h1V472h-1zM408 466h1V473h-1zM409 465h1V472h-1zM410 465h1V472h-1zM411 465h1V471h-1zM412 464h1V472h-1zM413 464h1V470h-1zM414 464h1V471h-1zM415 463h1V471h-1zM416 463h1V470h-1zM417 464h1V472h-1zM419 299h1V304h-1zM420 296h1V303h-1zM421 294h1V299h-1zM422 291h1V298h-1zM423 291h1V297h-1zM424 292h1V299h-1zM448 468h1V474h-1zM449 466h1V472h-1zM455 465h1V472h-1zM456 465h1V473h-1zM457 467h1V473h-1zM458 465h1V473h-1zM459 467h1V473h-1zM460 467h1V473h-1zM461 466h1V473h-1zM462 466h1V473h-1zM463 467h1V473h-1zM464 466h1V473h-1zM465 467h1V472h-1zM466 466h1V472h-1zM467 465h1V473h-1zM468 465h1V472h-1zM469 465h1V472h-1zM470 466h1V474h-1zM471 467h1V474h-1zM472 467h1V474h-1zM473 467h1V473h-1zM474 467h1V474h-1zM475 467h1V474h-1zM476 467h1V474h-1zM477 467h1V474h-1zM478 467h1V474h-1zM479 466h1V474h-1zM480 467h1V474h-1zM481 467h1V474h-1zM482 467h1V474h-1zM483 466h1V474h-1zM484 466h1V473h-1zM485 466h1V473h-1zM486 466h1V473h-1zM487 466h1V473h-1zM488 466h1V473h-1zM489 468h1V474h-1zM490 467h1V474h-1zM491 467h1V473h-1zM492 466h1V473h-1zM493 466h1V473h-1zM494 466h1V473h-1zM495 466h1V472h-1zM496 465h1V472h-1zM497 465h1V472h-1zM498 465h1V472h-1zM499 465h1V472h-1zM500 465h1V471h-1zM501 466h1V472h-1zM502 466h1V472h-1zM503 465h1V471h-1zM504 466h1V472h-1zM505 466h1V472h-1zM506 466h1V472h-1zM507 465h1V472h-1zM508 466h1V473h-1zM509 466h1V473h-1zM510 466h1V473h-1zM511 466h1V473h-1zM512 466h1V473h-1zM513 466h1V473h-1zM514 467h1V473h-1zM515 466h1V474h-1zM516 466h1V474h-1zM517 466h1V472h-1zM518 466h1V473h-1zM519 465h1V473h-1zM520 465h1V473h-1zM521 466h1V473h-1zM522 466h1V473h-1zM523 466h1V474h-1zM524 467h1V474h-1zM525 467h1V474h-1zM526 467h1V473h-1zM527 468h1V474h-1zM528 467h1V474h-1zM529 467h1V474h-1zM530 466h1V472h-1zM531 466h1V473h-1zM532 466h1V473h-1zM533 466h1V472h-1zM534 465h1V472h-1zM535 465h1V471h-1zM536 465h1V472h-1zM537 465h1V472h-1zM538 465h1V471h-1zM539 466h1V472h-1zM540 465h1V472h-1zM541 465h1V472h-1zM542 465h1V472h-1zM543 467h1V473h-1zM544 466h1V473h-1zM545 467h1V473h-1zM546 465h1V473h-1zM547 465h1V472h-1zM548 466h1V473h-1zM549 466h1V473h-1zM550 466h1V473h-1zM551 466h1V473h-1zM552 467h1V473h-1zM553 467h1V473h-1zM554 466h1V473h-1zM555 467h1V472h-1zM556 466h1V473h-1zM557 466h1V473h-1zM558 466h1V473h-1zM559 466h1V473h-1zM560 466h1V472h-1zM561 466h1V473h-1zM562 466h1V473h-1zM563 466h1V473h-1zM564 466h1V473h-1zM565 466h1V472h-1zM566 467h1V473h-1zM567 466h1V472h-1zM568 466h1V473h-1zM569 466h1V472h-1zM570 466h1V473h-1zM571 465h1V473h-1zM572 466h1V472h-1zM573 465h1V472h-1zM574 465h1V473h-1zM575 466h1V473h-1zM576 466h1V473h-1zM577 466h1V473h-1zM578 466h1V473h-1zM579 467h1V473h-1zM580 466h1V472h-1zM581 466h1V473h-1zM582 467h1V473h-1zM583 466h1V473h-1zM584 467h1V472h-1zM585 465h1V473h-1zM586 465h1V472h-1zM587 465h1V472h-1zM588 465h1V472h-1zM589 464h1V471h-1zM590 465h1V472h-1zM594 310h1V318h-1zM595 308h1V315h-1zM596 305h1V313h-1zM597 302h1V309h-1zM623 53h1V60h-1zM624 51h1V58h-1zM625 47h1V54h-1zM626 46h1V52h-1zM627 44h1V50h-1zM630 55h1V60h-1zM631 55h1V61h-1zM632 57h1V63h-1zM633 58h1V63h-1zM634 60h1V66h-1zM635 61h1V67h-1zM636 64h1V70h-1zM637 64h1V71h-1zM638 65h1V71h-1zM639 65h1V71h-1zM640 63h1V71h-1zM641 63h1V71h-1zM642 64h1V70h-1zM643 65h1V71h-1zM644 64h1V71h-1zM645 64h1V71h-1zM646 63h1V71h-1zM647 63h1V70h-1zM648 63h1V70h-1zM649 64h1V71h-1zM650 65h1V70h-1zM651 64h1V72h-1zM652 65h1V72h-1zM653 65h1V72h-1zM654 65h1V72h-1zM655 66h1V74h-1zM656 66h1V74h-1zM657 65h1V73h-1zM658 64h1V72h-1zM659 64h1V71h-1zM660 63h1V70h-1zM661 64h1V71h-1zM662 64h1V72h-1zM663 65h1V73h-1zM664 65h1V73h-1zM665 65h1V72h-1zM666 65h1V71h-1zM667 63h1V71h-1zM668 63h1V70h-1zM669 63h1V70h-1zM670 62h1V69h-1zM671 62h1V69h-1zM672 61h1V67h-1zM673 60h1V67h-1zM674 60h1V67h-1zM675 60h1V66h-1zM676 61h1V68h-1zM677 63h1V70h-1zM678 63h1V71h-1zM679 64h1V71h-1zM680 64h1V72h-1zM681 66h1V72h-1zM682 65h1V73h-1zM683 66h1V74h-1zM684 67h1V74h-1zM685 67h1V74h-1zM686 67h1V74h-1zM687 67h1V74h-1zM688 67h1V75h-1zM689 66h1V74h-1zM690 66h1V73h-1zM691 65h1V71h-1zM692 65h1V72h-1zM693 66h1V73h-1zM694 66h1V73h-1zM695 66h1V74h-1zM696 67h1V75h-1zM697 68h1V74h-1zM698 69h1V76h-1zM699 68h1V76h-1zM700 69h1V76h-1zM701 68h1V76h-1zM702 69h1V76h-1zM703 69h1V76h-1zM704 70h1V76h-1zM705 69h1V76h-1zM706 69h1V76h-1zM707 71h1V76h-1zM708 70h1V77h-1zM709 69h1V76h-1zM710 68h1V76h-1zM711 68h1V75h-1zM712 69h1V76h-1zM713 70h1V77h-1zM714 70h1V77h-1zM715 70h1V76h-1zM716 70h1V77h-1zM717 70h1V77h-1zM718 70h1V78h-1zM719 71h1V78h-1zM720 71h1V78h-1zM721 71h1V79h-1zM722 73h1V80h-1zM723 73h1V80h-1zM724 74h1V81h-1zM725 74h1V81h-1zM726 75h1V82h-1zM727 75h1V83h-1zM728 76h1V83h-1zM729 76h1V84h-1zM730 77h1V84h-1zM731 75h1V83h-1zM732 74h1V82h-1zM733 72h1V78h-1zM734 70h1V78h-1zM735 71h1V78h-1zM736 73h1V80h-1zM737 75h1V81h-1zM738 76h1V83h-1zM739 78h1V84h-1zM740 79h1V86h-1zM741 81h1V87h-1zM742 82h1V89h-1zM743 83h1V90h-1zM744 83h1V91h-1zM745 83h1V91h-1zM746 83h1V90h-1zM747 83h1V89h-1zM748 81h1V89h-1zM749 81h1V88h-1zM750 80h1V87h-1zM751 79h1V87h-1zM752 79h1V84h-1zM753 77h1V85h-1zM754 80h1V87h-1zM755 82h1V90h-1zM756 85h1V93h-1zM757 87h1V94h-1zM758 86h1V93h-1zM759 85h1V92h-1zM760 85h1V89h-1zM761 83h1V89h-1zM762 81h1V88h-1zM763 80h1V86h-1zM764 78h1V86h-1zM778 79h1V87h-1zM779 79h1V86h-1zM780 80h1V86h-1zM781 79h1V86h-1zM782 80h1V87h-1zM783 80h1V87h-1zM784 79h1V87h-1zM787 90h1V97h-1zM788 90h1V96h-1zM789 89h1V97h-1zM790 88h1V96h-1zM791 89h1V95h-1zM792 89h1V95h-1zM793 89h1V96h-1zM794 90h1V97h-1zM795 90h1V97h-1zM796 89h1V97h-1zM797 88h1V95h-1zM798 87h1V93h-1zM799 85h1V93h-1zM800 85h1V91h-1zM801 84h1V91h-1zM802 83h1V91h-1zM803 84h1V90h-1zM804 83h1V90h-1zM805 83h1V90h-1zM806 82h1V88h-1zM807 82h1V89h-1zM808 82h1V89h-1zM809 82h1V89h-1zM810 81h1V88h-1zM811 81h1V88h-1zM812 81h1V88h-1zM813 82h1V89h-1zM814 84h1V90h-1zM820 92h1V100h-1zM821 92h1V99h-1zM822 90h1V98h-1zM823 89h1V97h-1zM824 89h1V96h-1zM825 88h1V95h-1zM826 88h1V94h-1zM827 87h1V95h-1zM828 88h1V94h-1zM829 87h1V95h-1zM830 88h1V95h-1zM831 88h1V96h-1zM832 88h1V96h-1zM833 87h1V94h-1zM834 86h1V94h-1zM835 85h1V93h-1zM836 84h1V91h-1zM837 84h1V91h-1zM838 84h1V92h-1zM839 85h1V92h-1zM840 86h1V93h-1zM841 88h1V93h-1zM842 89h1V96h-1zM843 91h1V98h-1zM844 92h1V98h-1zM845 92h1V99h-1zM846 92h1V99h-1zM847 93h1V99h-1zM848 93h1V100h-1zM849 93h1V101h-1zM850 94h1V101h-1zM864 74h1V81h-1zM867 93h1V98h-1zM868 92h1V99h-1zM869 92h1V99h-1zM870 92h1V100h-1zM871 94h1V100h-1zM872 92h1V99h-1zM873 92h1V99h-1zM874 91h1V99h-1zM875 92h1V98h-1zM876 94h1V101h-1zM877 97h1V104h-1zM878 100h1V107h-1zM879 103h1V111h-1zM880 103h1V111h-1zM881 101h1V108h-1zM882 99h1V105h-1zM883 95h1V103h-1zM884 93h1V100h-1zM885 91h1V97h-1zM886 92h1V98h-1zM887 93h1V100h-1zM888 94h1V102h-1zM889 96h1V104h-1zM890 96h1V103h-1zM891 94h1V101h-1zM892 91h1V100h-1zM893 91h1V99h-1zM894 92h1V99h-1zM895 91h1V99h-1zM896 92h1V99h-1zM897 92h1V99h-1zM898 92h1V98h-1zM903 101h1V109h-1zM904 101h1V109h-1zM905 102h1V108h-1zM906 102h1V108h-1zM907 103h1V110h-1zM908 102h1V109h-1zM909 100h1V107h-1zM910 98h1V104h-1zM911 96h1V103h-1zM912 94h1V101h-1zM913 91h1V99h-1zM914 89h1V96h-1zM915 86h1V93h-1zM920 110h1V119h-1zM932 83h1V91h-1zM933 81h1V88h-1zM934 82h1V89h-1zM935 85h1V92h-1zM936 87h1V93h-1zM948 98h1V105h-1zM949 96h1V103h-1zM950 95h1V101h-1zM951 92h1V99h-1zM954 114h1V122h-1zM955 110h1V119h-1zM956 108h1V115h-1zM957 106h1V113h-1zM958 106h1V112h-1zM959 108h1V115h-1zM960 109h1V117h-1zM961 110h1V117h-1zM970 94h1V101h-1zM971 95h1V101h-1zM972 93h1V98h-1zM973 92h1V100h-1zM974 93h1V99h-1zM975 93h1V101h-1zM976 94h1V102h-1zM977 95h1V103h-1zM978 96h1V104h-1zM987 110h1V116h-1zM988 108h1V116h-1zM989 105h1V113h-1zM990 103h1V110h-1zM1001 110h1V116h-1zM1002 107h1V114h-1zM1003 104h1V111h-1zM1004 101h1V109h-1zM1009 92h1V99h-1zM1010 92h1V99h-1zM1011 92h1V98h-1zM1012 93h1V99h-1zM1015 113h1V120h-1zM1016 112h1V119h-1zM1019 101h1V108h-1zM1020 100h1V108h-1z"/><path fill="#00ff00" d="M21 251h1V252h-1zM22 251h1V252h-1zM23 251h1V252h-1zM25 251h1V252h-1zM27 251h1V252h-1zM28 252h1V253h-1zM30 251h1V252h-1zM31 251h1V252h-1zM32 250h1V251h-1zM33 252h1V253h-1zM35 252h1V253h-1zM36 251h1V252h-1zM37 251h1V252h-1zM38 250h1V251h-1zM39 253h1V254h-1zM42 251h1V252h-1zM44 251h1V252h-1zM46 251h1V252h-1zM47 252h1V253h-1zM49 252h1V253h-1zM51 252h1V253h-1zM52 253h1V254h-1zM53 252h1V253h-1zM55 252h1V253h-1zM56 252h1V253h-1zM57 254h1V255h-1zM58 252h1V253h-1zM59 252h1V253h-1zM60 252h1V253h-1zM61 252h1V253h-1zM64 253h1V254h-1zM65 252h1V253h-1zM66 253h1V254h-1zM68 253h1V254h-1zM69 253h1V254h-1zM71 253h1V254h-1zM72 254h1V255h-1zM73 254h1V255h-1zM74 253h1V254h-1zM76 252h1V253h-1zM77 252h1V253h-1zM78 253h1V254h-1zM79 252h1V253h-1zM80 251h1V252h-1zM81 251h1V252h-1zM82 253h1V254h-1zM83 252h1V253h-1zM84 253h1V254h-1zM85 252h1V253h-1zM86 253h1V254h-1zM87 253h1V254h-1zM88 253h1V254h-1zM89 253h1V254h-1zM90 253h1V254h-1zM91 253h1V254h-1zM92 252h1V253h-1zM93 252h1V253h-1zM95 253h1V254h-1zM96 252h1V253h-1zM97 253h1V254h-1zM98 253h1V254h-1zM99 252h1V253h-1zM101 253h1V254h-1zM102 252h1V253h-1zM105 251h1V252h-1zM107 252h1V253h-1zM108 253h1V254h-1zM109 252h1V253h-1zM110 252h1V253h-1zM114 252h1V253h-1zM115 252h1V253h-1zM116 253h1V254h-1zM117 253h1V254h-1zM118 252h1V253h-1zM119 251h1V252h-1zM120 251h1V252h-1zM121 249h1V250h-1zM123 250h1V251h-1zM124 251h1V252h-1zM125 250h1V251h-1zM126 250h1V251h-1zM127 249h1V250h-1zM130 250h1V251h-1zM131 250h1V251h-1zM133 250h1V251h-1zM134 250h1V251h-1zM135 252h1V253h-1zM136 252h1V253h-1zM137 253h1V254h-1zM138 251h1V252h-1zM140 251h1V252h-1zM143 251h1V252h-1zM144 252h1V253h-1zM145 250h1V251h-1zM146 251h1V252h-1zM148 251h1V252h-1zM149 251h1V252h-1zM151 252h1V253h-1zM152 252h1V253h-1zM153 251h1V252h-1zM154 252h1V253h-1zM155 253h1V254h-1zM156 252h1V253h-1zM157 252h1V253h-1zM158 251h1V252h-1zM159 253h1V254h-1zM160 252h1V253h-1zM162 250h1V251h-1zM163 251h1V252h-1zM164 251h1V252h-1zM166 251h1V252h-1zM167 251h1V252h-1zM168 250h1V251h-1zM170 252h1V253h-1zM171 252h1V253h-1zM172 251h1V252h-1zM173 251h1V252h-1zM174 250h1V251h-1zM176 249h1V250h-1zM177 250h1V251h-1zM179 251h1V252h-1zM180 252h1V253h-1zM181 252h1V253h-1zM182 251h1V252h-1zM186 253h1V254h-1zM190 252h1V253h-1zM191 254h1V255h-1zM192 253h1V254h-1zM193 254h1V255h-1zM194 254h1V255h-1zM195 253h1V254h-1zM196 252h1V253h-1zM199 250h1V251h-1zM200 250h1V251h-1zM201 253h1V254h-1zM202 252h1V253h-1zM203 253h1V254h-1zM204 252h1V253h-1zM205 252h1V253h-1zM206 253h1V254h-1zM207 254h1V255h-1zM208 253h1V254h-1zM209 253h1V254h-1zM210 251h1V252h-1zM212 252h1V253h-1zM213 253h1V254h-1zM214 252h1V253h-1zM215 252h1V253h-1zM216 253h1V254h-1zM217 252h1V253h-1zM218 252h1V253h-1zM219 253h1V254h-1zM220 253h1V254h-1zM221 251h1V252h-1zM224 251h1V252h-1zM225 251h1V252h-1zM226 250h1V251h-1zM228 252h1V253h-1zM229 250h1V251h-1zM230 251h1V252h-1zM231 251h1V252h-1zM233 250h1V251h-1zM236 250h1V251h-1zM237 249h1V250h-1zM238 252h1V253h-1zM239 251h1V252h-1zM241 251h1V252h-1zM242 251h1V252h-1zM243 251h1V252h-1zM246 250h1V251h-1zM247 251h1V252h-1zM248 251h1V252h-1zM249 251h1V252h-1zM250 251h1V252h-1zM251 252h1V253h-1zM252 251h1V252h-1zM254 252h1V253h-1zM255 252h1V253h-1zM257 252h1V253h-1zM258 253h1V254h-1zM259 252h1V253h-1zM263 253h1V254h-1zM264 252h1V253h-1zM265 254h1V255h-1zM266 254h1V255h-1zM267 255h1V256h-1zM268 255h1V260h-1zM302 289h1V293h-1zM326 252h1V255h-1zM327 250h1V253h-1zM331 253h1V257h-1zM332 251h1V254h-1zM351 493h1V494h-1zM352 491h1V494h-1zM353 488h1V492h-1zM354 487h1V489h-1zM358 468h1V469h-1zM359 467h1V468h-1zM360 468h1V469h-1zM362 469h1V470h-1zM363 469h1V470h-1zM364 469h1V470h-1zM365 469h1V470h-1zM367 469h1V470h-1zM368 468h1V469h-1zM369 468h1V469h-1zM370 470h1V471h-1zM371 469h1V470h-1zM372 470h1V471h-1zM373 469h1V470h-1zM374 470h1V471h-1zM376 470h1V471h-1zM377 470h1V471h-1zM378 471h1V472h-1zM380 472h1V473h-1zM381 471h1V472h-1zM382 470h1V471h-1zM383 470h1V471h-1zM384 470h1V471h-1zM385 469h1V470h-1zM387 470h1V471h-1zM388 469h1V470h-1zM390 470h1V471h-1zM391 469h1V470h-1zM392 470h1V471h-1zM394 470h1V471h-1zM395 470h1V471h-1zM397 470h1V471h-1zM400 468h1V469h-1zM401 468h1V469h-1zM402 469h1V470h-1zM403 469h1V470h-1zM404 469h1V470h-1zM405 470h1V471h-1zM406 469h1V470h-1zM408 469h1V470h-1zM409 467h1V468h-1zM410 468h1V469h-1zM411 469h1V470h-1zM412 467h1V468h-1zM413 467h1V468h-1zM414 467h1V468h-1zM415 466h1V467h-1zM416 466h1V467h-1zM419 299h1V303h-1zM420 298h1V301h-1zM421 295h1V296h-1zM422 293h1V294h-1zM423 292h1V293h-1zM424 293h1V294h-1zM448 470h1V471h-1zM455 467h1V468h-1zM456 468h1V469h-1zM457 469h1V470h-1zM458 467h1V468h-1zM460 470h1V471h-1zM461 468h1V469h-1zM462 468h1V469h-1zM463 470h1V471h-1zM464 469h1V470h-1zM465 469h1V470h-1zM466 469h1V470h-1zM467 467h1V468h-1zM468 468h1V469h-1zM469 468h1V469h-1zM470 469h1V470h-1zM471 469h1V470h-1zM472 471h1V472h-1zM473 471h1V472h-1zM474 470h1V471h-1zM475 470h1V471h-1zM476 470h1V471h-1zM477 470h1V471h-1zM479 469h1V470h-1zM480 469h1V470h-1zM481 471h1V472h-1zM482 469h1V470h-1zM484 469h1V470h-1zM485 469h1V470h-1zM486 468h1V469h-1zM487 469h1V470h-1zM488 469h1V470h-1zM489 469h1V470h-1zM490 469h1V470h-1zM491 468h1V469h-1zM492 469h1V470h-1zM493 470h1V471h-1zM494 468h1V469h-1zM495 469h1V470h-1zM496 468h1V469h-1zM498 468h1V469h-1zM499 468h1V469h-1zM500 468h1V469h-1zM501 468h1V469h-1zM502 468h1V469h-1zM503 469h1V470h-1zM504 467h1V468h-1zM505 469h1V470h-1zM506 468h1V469h-1zM507 468h1V469h-1zM508 470h1V471h-1zM509 469h1V470h-1zM510 469h1V470h-1zM511 469h1V470h-1zM512 470h1V471h-1zM513 469h1V470h-1zM515 469h1V470h-1zM516 469h1V470h-1zM517 468h1V469h-1zM518 468h1V469h-1zM519 468h1V469h-1zM521 469h1V470h-1zM522 470h1V471h-1zM523 469h1V470h-1zM524 469h1V470h-1zM527 470h1V471h-1zM528 469h1V470h-1zM529 470h1V471h-1zM530 470h1V471h-1zM531 470h1V471h-1zM533 470h1V471h-1zM534 468h1V469h-1zM535 467h1V468h-1zM536 469h1V470h-1zM537 469h1V470h-1zM538 467h1V468h-1zM539 469h1V470h-1zM540 468h1V469h-1zM542 469h1V470h-1zM543 470h1V471h-1zM544 469h1V470h-1zM545 468h1V469h-1zM546 468h1V469h-1zM547 469h1V470h-1zM548 469h1V470h-1zM549 468h1V469h-1zM550 469h1V470h-1zM551 469h1V470h-1zM552 468h1V469h-1zM553 468h1V469h-1zM554 469h1V470h-1zM555 468h1V469h-1zM556 469h1V470h-1zM557 470h1V471h-1zM558 469h1V470h-1zM559 470h1V471h-1zM560 468h1V469h-1zM561 469h1V470h-1zM562 470h1V471h-1zM563 468h1V469h-1zM564 469h1V470h-1zM565 469h1V470h-1zM566 469h1V470h-1zM567 469h1V470h-1zM568 469h1V470h-1zM569 469h1V470h-1zM570 468h1V469h-1zM571 469h1V470h-1zM573 468h1V469h-1zM574 468h1V469h-1zM575 468h1V469h-1zM577 469h1V470h-1zM578 469h1V470h-1zM579 469h1V470h-1zM580 469h1V470h-1zM581 469h1V470h-1zM582 469h1V470h-1zM583 468h1V469h-1zM585 469h1V470h-1zM586 469h1V470h-1zM588 468h1V469h-1zM589 467h1V468h-1zM590 468h1V469h-1zM595 310h1V313h-1zM596 308h1V311h-1zM597 305h1V308h-1zM623 56h1V59h-1zM624 53h1V56h-1zM625 48h1V53h-1zM626 47h1V50h-1zM627 45h1V48h-1zM630 56h1V57h-1zM631 58h1V59h-1zM632 59h1V60h-1zM633 61h1V62h-1zM634 63h1V64h-1zM635 63h1V64h-1zM636 67h1V68h-1zM637 67h1V68h-1zM638 67h1V68h-1zM639 67h1V68h-1zM640 66h1V67h-1zM641 66h1V67h-1zM642 67h1V68h-1zM643 67h1V68h-1zM644 68h1V69h-1zM645 68h1V69h-1zM646 67h1V68h-1zM648 66h1V67h-1zM649 67h1V68h-1zM650 67h1V68h-1zM651 68h1V69h-1zM652 68h1V69h-1zM654 68h1V69h-1zM655 69h1V70h-1zM656 69h1V70h-1zM657 68h1V69h-1zM658 68h1V69h-1zM660 66h1V67h-1zM661 67h1V68h-1zM662 67h1V68h-1zM663 67h1V68h-1zM664 69h1V70h-1zM665 67h1V68h-1zM666 67h1V68h-1zM667 66h1V67h-1zM668 66h1V67h-1zM669 65h1V66h-1zM670 65h1V66h-1zM671 64h1V65h-1zM672 64h1V65h-1zM673 62h1V63h-1zM674 63h1V64h-1zM676 64h1V65h-1zM677 66h1V67h-1zM678 66h1V67h-1zM679 66h1V67h-1zM680 67h1V68h-1zM681 68h1V69h-1zM682 68h1V69h-1zM683 69h1V70h-1zM684 71h1V72h-1zM685 70h1V71h-1zM686 70h1V71h-1zM688 70h1V71h-1zM689 69h1V70h-1zM690 69h1V70h-1zM692 68h1V69h-1zM693 68h1V69h-1zM694 69h1V70h-1zM695 69h1V70h-1zM696 70h1V71h-1zM697 71h1V72h-1zM698 72h1V73h-1zM699 72h1V73h-1zM700 72h1V73h-1zM701 71h1V72h-1zM703 72h1V73h-1zM704 72h1V73h-1zM705 72h1V73h-1zM706 71h1V72h-1zM707 72h1V73h-1zM709 73h1V74h-1zM710 71h1V72h-1zM711 72h1V73h-1zM712 73h1V74h-1zM713 71h1V72h-1zM714 73h1V74h-1zM716 74h1V75h-1zM718 73h1V74h-1zM719 74h1V75h-1zM720 74h1V75h-1zM722 76h1V77h-1zM723 76h1V77h-1zM724 76h1V77h-1zM725 77h1V78h-1zM727 78h1V79h-1zM728 80h1V81h-1zM729 79h1V80h-1zM730 79h1V80h-1zM731 77h1V78h-1zM732 77h1V78h-1zM733 75h1V76h-1zM735 73h1V74h-1zM736 76h1V77h-1zM737 78h1V79h-1zM738 78h1V79h-1zM739 79h1V80h-1zM740 82h1V83h-1zM741 83h1V84h-1zM742 84h1V85h-1zM744 86h1V87h-1zM745 86h1V87h-1zM746 85h1V86h-1zM748 85h1V86h-1zM749 84h1V85h-1zM752 80h1V81h-1zM753 79h1V83h-1zM756 87h1V91h-1zM757 90h1V91h-1zM758 88h1V89h-1zM759 88h1V89h-1zM760 87h1V88h-1zM762 83h1V84h-1zM763 82h1V83h-1zM764 82h1V83h-1zM779 81h1V82h-1zM780 82h1V83h-1zM781 82h1V83h-1zM782 83h1V84h-1zM783 83h1V84h-1zM784 82h1V83h-1zM787 94h1V95h-1zM791 91h1V92h-1zM792 91h1V92h-1zM793 92h1V93h-1zM794 93h1V94h-1zM795 94h1V95h-1zM798 89h1V90h-1zM799 89h1V90h-1zM800 87h1V88h-1zM802 87h1V88h-1zM803 86h1V87h-1zM804 86h1V87h-1zM807 85h1V86h-1zM808 85h1V86h-1zM809 84h1V85h-1zM810 84h1V85h-1zM811 83h1V84h-1zM812 84h1V85h-1zM813 84h1V85h-1zM820 95h1V96h-1zM821 94h1V95h-1zM825 91h1V92h-1zM826 91h1V92h-1zM828 91h1V92h-1zM829 91h1V92h-1zM830 91h1V92h-1zM831 92h1V93h-1zM832 91h1V92h-1zM834 89h1V90h-1zM835 89h1V90h-1zM836 87h1V88h-1zM837 87h1V88h-1zM838 88h1V89h-1zM839 88h1V89h-1zM841 89h1V90h-1zM843 94h1V95h-1zM844 96h1V97h-1zM845 95h1V96h-1zM846 95h1V96h-1zM848 95h1V96h-1zM849 97h1V98h-1zM850 96h1V97h-1zM867 95h1V96h-1zM868 94h1V95h-1zM871 96h1V97h-1zM872 95h1V96h-1zM873 95h1V96h-1zM875 94h1V95h-1zM876 96h1V99h-1zM877 99h1V102h-1zM878 102h1V106h-1zM879 104h1V109h-1zM881 103h1V106h-1zM882 100h1V103h-1zM883 97h1V101h-1zM885 94h1V95h-1zM886 93h1V96h-1zM887 96h1V98h-1zM888 97h1V98h-1zM889 98h1V99h-1zM892 94h1V95h-1zM894 95h1V96h-1zM897 95h1V96h-1zM903 105h1V106h-1zM904 105h1V106h-1zM905 105h1V106h-1zM906 104h1V105h-1zM907 104h1V105h-1zM908 104h1V105h-1zM909 102h1V103h-1zM910 99h1V100h-1zM911 98h1V99h-1zM914 92h1V94h-1zM920 113h1V117h-1zM932 84h1V89h-1zM933 83h1V84h-1zM935 88h1V90h-1zM936 89h1V90h-1zM948 101h1V103h-1zM949 98h1V99h-1zM950 96h1V99h-1zM951 94h1V95h-1zM954 116h1V120h-1zM955 113h1V117h-1zM956 110h1V113h-1zM957 107h1V111h-1zM958 108h1V111h-1zM959 110h1V113h-1zM961 113h1V114h-1zM970 97h1V98h-1zM971 96h1V97h-1zM972 95h1V96h-1zM974 95h1V96h-1zM975 96h1V97h-1zM976 97h1V98h-1zM977 97h1V98h-1zM978 99h1V100h-1zM987 111h1V112h-1zM988 110h1V114h-1zM990 105h1V108h-1zM1003 105h1V109h-1zM1009 95h1V96h-1zM1010 95h1V96h-1zM1011 95h1V96h-1zM1012 94h1V95h-1zM1015 115h1V116h-1zM1020 103h1V104h-1z"/><path fill="#00b800" d="M270 261h1V266h-1zM275 279h1V286h-1zM276 273h1V281h-1zM277 264h1V275h-1zM278 261h1V266h-1zM279 261h1V273h-1zM281 296h1V310h-1zM282 290h1V297h-1zM290 290h1V304h-1zM294 256h1V270h-1zM296 457h1V468h-1zM297 466h1V477h-1zM301 290h1V302h-1zM303 280h1V290h-1zM304 267h1V282h-1zM305 261h1V268h-1zM306 261h1V277h-1zM307 270h1V277h-1zM308 265h1V272h-1zM309 259h1V266h-1zM312 350h1V361h-1zM314 296h1V309h-1zM315 295h1V309h-1zM316 283h1V297h-1zM317 275h1V284h-1zM318 268h1V277h-1zM319 263h1V269h-1zM320 253h1V265h-1zM321 239h1V255h-1zM323 260h1V266h-1zM324 256h1V262h-1zM328 248h1V255h-1zM329 253h1V260h-1zM333 250h1V257h-1zM334 256h1V263h-1zM337 305h1V319h-1zM339 331h1V346h-1zM341 295h1V306h-1zM342 286h1V297h-1zM343 286h1V293h-1zM346 290h1V306h-1zM355 479h1V487h-1zM356 473h1V481h-1zM357 467h1V475h-1zM425 292h1V297h-1zM426 283h1V293h-1zM427 283h1V292h-1zM428 291h1V307h-1zM430 277h1V287h-1zM431 268h1V278h-1zM432 264h1V270h-1zM437 472h1V479h-1zM443 313h1V322h-1zM446 456h1V467h-1zM447 456h1V473h-1zM450 468h1V481h-1zM451 480h1V493h-1zM452 480h1V493h-1zM453 473h1V481h-1zM454 467h1V475h-1zM592 323h1V331h-1zM593 316h1V324h-1zM598 297h1V306h-1zM599 285h1V298h-1zM600 279h1V286h-1zM602 213h1V226h-1zM603 207h1V215h-1zM604 202h1V208h-1zM605 197h1V203h-1zM606 192h1V198h-1zM607 188h1V193h-1zM608 182h1V190h-1zM611 123h1V130h-1zM612 119h1V124h-1zM613 115h1V121h-1zM614 111h1V117h-1zM615 107h1V113h-1zM616 103h1V109h-1zM617 99h1V105h-1zM618 96h1V101h-1zM620 66h1V71h-1zM621 62h1V68h-1zM622 59h1V64h-1zM628 44h1V50h-1zM629 48h1V58h-1zM765 81h1V88h-1zM766 86h1V93h-1zM767 91h1V98h-1zM768 96h1V102h-1zM769 100h1V106h-1zM770 99h1V106h-1zM771 94h1V101h-1zM772 88h1V95h-1zM773 88h1V96h-1zM774 94h1V102h-1zM775 94h1V102h-1zM776 89h1V96h-1zM777 83h1V91h-1zM785 82h1V90h-1zM786 89h1V97h-1zM815 85h1V97h-1zM816 95h1V108h-1zM817 102h1V108h-1zM818 99h1V104h-1zM819 95h1V100h-1zM852 122h1V137h-1zM853 135h1V150h-1zM854 148h1V158h-1zM855 134h1V152h-1zM857 111h1V120h-1zM858 103h1V113h-1zM859 96h1V105h-1zM860 91h1V98h-1zM861 87h1V93h-1zM862 82h1V88h-1zM863 77h1V84h-1zM865 77h1V87h-1zM866 86h1V96h-1zM899 95h1V106h-1zM900 104h1V115h-1zM901 109h1V115h-1zM902 104h1V111h-1zM916 88h1V96h-1zM917 94h1V103h-1zM918 101h1V109h-1zM919 107h1V114h-1zM923 151h1V163h-1zM924 141h1V153h-1zM925 127h1V143h-1zM926 113h1V129h-1zM927 108h1V115h-1zM928 102h1V110h-1zM929 96h1V104h-1zM930 91h1V98h-1zM931 87h1V93h-1zM937 90h1V96h-1zM938 94h1V100h-1zM939 98h1V105h-1zM941 114h1V121h-1zM942 110h1V116h-1zM943 105h1V112h-1zM944 105h1V111h-1zM945 109h1V115h-1zM946 108h1V115h-1zM947 102h1V109h-1zM952 94h1V108h-1zM953 106h1V120h-1zM962 105h1V115h-1zM963 96h1V106h-1zM964 96h1V108h-1zM965 106h1V118h-1zM966 111h1V118h-1zM967 105h1V113h-1zM968 101h1V107h-1zM969 97h1V103h-1zM979 100h1V115h-1zM980 113h1V128h-1zM985 119h1V128h-1zM986 113h1V121h-1zM991 98h1V105h-1zM992 93h1V100h-1zM993 93h1V105h-1zM994 103h1V115h-1zM997 144h1V159h-1zM998 131h1V146h-1zM999 122h1V133h-1zM1000 113h1V124h-1zM1005 90h1V103h-1zM1006 85h1V92h-1zM1007 87h1V92h-1zM1008 90h1V97h-1zM1013 95h1V107h-1zM1014 105h1V118h-1zM1017 109h1V116h-1zM1018 104h1V111h-1z"/><path fill="#137c13" d="M271 264h1V287h-1zM272 285h1V335h-1zM273 302h1V335h-1zM274 284h1V304h-1zM280 272h1V306h-1zM283 290h1V465h-1zM284 463h1V489h-1zM285 340h1V489h-1zM286 340h1V394h-1zM287 300h1V394h-1zM288 300h1V393h-1zM289 290h1V393h-1zM291 303h1V400h-1zM292 294h1V400h-1zM293 268h1V295h-1zM295 263h1V458h-1zM298 348h1V477h-1zM299 318h1V349h-1zM300 300h1V319h-1zM310 259h1V293h-1zM311 292h1V361h-1zM313 296h1V351h-1zM322 239h1V266h-1zM335 262h1V280h-1zM336 278h1V306h-1zM338 318h1V337h-1zM340 305h1V333h-1zM344 292h1V342h-1zM345 305h1V342h-1zM347 283h1V321h-1zM348 319h1V424h-1zM349 423h1V492h-1zM418 302h1V469h-1zM429 286h1V307h-1zM433 267h1V298h-1zM434 297h1V442h-1zM435 346h1V411h-1zM436 332h1V473h-1zM438 377h1V481h-1zM439 377h1V427h-1zM440 426h1V451h-1zM441 338h1V451h-1zM442 313h1V339h-1zM444 321h1V444h-1zM445 443h1V471h-1zM591 330h1V470h-1zM601 224h1V280h-1zM609 155h1V184h-1zM610 129h1V156h-1zM619 70h1V97h-1zM851 97h1V124h-1zM856 118h1V136h-1zM921 115h1V145h-1zM922 143h1V163h-1zM940 103h1V121h-1zM981 126h1V146h-1zM982 144h1V163h-1zM983 143h1V164h-1zM984 126h1V145h-1zM995 113h1V137h-1zM996 135h1V159h-1z"/>
<path fill="#9c5a35" d="M21 236H22V242H24V244H34V247H81V249H102V252H129V254H221V257H102V260H59V262H41V265H33V270H27V278H26V283H25V288H24V299H23V335H22V340H21Z"/>
<path fill="#780078" d="M28 177h1V178h-1zM34 177h1V179h-1zM35 177h1V179h-1zM37 177h1V178h-1zM40 177h1V178h-1zM47 177h1V178h-1zM54 177h1V179h-1zM56 171h1V172h-1zM57 169h1V170h-1zM59 169h1V170h-1zM65 177h1V178h-1zM73 169h1V170h-1zM75 167h1V169h-1zM76 176h1V177h-1zM81 168h1V170h-1zM84 169h1V170h-1zM88 177h1V179h-1zM89 177h1V178h-1zM90 177h1V179h-1zM94 178h1V180h-1zM96 169h1V171h-1zM97 178h1V180h-1zM98 177h1V179h-1zM100 169h1V170h-1zM116 178h1V179h-1zM120 168h1V170h-1zM123 176h1V177h-1zM124 175h1V177h-1zM128 168h1V170h-1zM129 169h1V170h-1zM134 176h1V177h-1zM136 176h1V178h-1zM142 169h1V170h-1zM143 177h1V179h-1zM150 178h1V180h-1zM151 169h1V171h-1zM153 178h1V180h-1zM157 170h1V171h-1zM161 168h1V170h-1zM165 171h1V172h-1zM166 170h1V171h-1zM171 170h1V171h-1zM179 178h1V179h-1zM183 178h1V179h-1zM186 169h1V170h-1zM191 167h1V169h-1zM201 168h1V170h-1zM205 177h1V179h-1zM210 168h1V170h-1zM221 169h1V170h-1zM225 169h1V170h-1zM226 168h1V170h-1zM227 177h1V179h-1zM228 177h1V178h-1zM236 169h1V170h-1zM240 168h1V170h-1zM242 169h1V171h-1zM246 177h1V179h-1zM262 179h1V181h-1zM263 171h1V172h-1zM269 169h1V170h-1zM270 178h1V180h-1zM273 168h1V170h-1zM275 168h1V170h-1zM282 169h1V170h-1zM292 170h1V171h-1zM293 178h1V179h-1zM296 178h1V180h-1zM300 176h1V177h-1zM304 176h1V177h-1zM307 177h1V179h-1zM317 177h1V179h-1zM320 169h1V171h-1zM333 178h1V180h-1zM335 178h1V179h-1zM337 178h1V180h-1zM341 168h1V170h-1zM342 170h1V171h-1zM343 178h1V180h-1zM347 169h1V171h-1zM362 189h1V191h-1zM368 175h1V177h-1zM373 177h1V178h-1zM377 189h1V191h-1zM383 174h1V175h-1zM385 186h1V188h-1zM386 177h1V179h-1zM392 183h1V185h-1zM402 172h1V174h-1zM405 179h1V180h-1zM411 180h1V181h-1zM415 177h1V178h-1zM419 178h1V180h-1zM421 178h1V180h-1zM422 178h1V179h-1zM424 171h1V172h-1zM425 178h1V179h-1zM428 178h1V180h-1zM429 169h1V171h-1zM434 180h1V181h-1zM438 180h1V181h-1zM439 180h1V182h-1zM445 180h1V181h-1zM447 179h1V181h-1zM449 171h1V172h-1zM456 186h1V188h-1zM458 187h1V189h-1zM459 188h1V189h-1zM477 195h1V196h-1zM478 183h1V184h-1zM483 181h1V183h-1zM485 186h1V188h-1zM488 183h1V185h-1zM490 181h1V182h-1zM500 179h1V180h-1zM513 205h1V206h-1zM519 189h1V190h-1zM584 345h1V346h-1zM586 339h1V341h-1zM587 335h1V336h-1zM591 314h1V315h-1zM612 214h1V215h-1zM627 196h1V198h-1zM640 205h1V207h-1zM641 205h1V206h-1zM643 205h1V206h-1zM646 205h1V206h-1zM648 199h1V200h-1zM649 199h1V200h-1zM655 200h1V201h-1zM657 198h1V200h-1zM659 199h1V201h-1zM662 206h1V207h-1zM664 207h1V208h-1zM666 206h1V207h-1zM686 207h1V209h-1zM687 209h1V211h-1zM690 218h1V219h-1zM692 212h1V213h-1zM693 222h1V224h-1zM694 216h1V217h-1zM697 231h1V232h-1zM702 235h1V237h-1zM705 253h1V255h-1zM708 260h1V261h-1zM709 254h1V256h-1zM714 274h1V275h-1zM721 280h1V282h-1zM723 289h1V290h-1zM724 289h1V291h-1zM732 284h1V286h-1zM734 272h1V274h-1zM737 275h1V276h-1zM739 272h1V273h-1zM743 261h1V262h-1zM749 237h1V238h-1zM752 232h1V233h-1zM755 236h1V237h-1zM758 222h1V223h-1zM774 221h1V223h-1zM776 212h1V213h-1zM778 220h1V221h-1zM788 208h1V209h-1zM791 215h1V216h-1zM798 205h1V206h-1zM799 211h1V213h-1zM800 213h1V214h-1zM802 214h1V215h-1zM807 205h1V206h-1zM809 213h1V214h-1zM811 206h1V207h-1zM813 213h1V214h-1zM816 204h1V205h-1zM819 205h1V206h-1zM820 206h1V207h-1zM826 214h1V216h-1zM827 214h1V215h-1zM841 208h1V210h-1zM868 205h1V206h-1zM872 205h1V207h-1zM877 205h1V206h-1zM880 198h1V200h-1zM881 198h1V199h-1zM884 209h1V211h-1zM888 201h1V203h-1zM895 207h1V209h-1zM896 206h1V208h-1zM905 209h1V210h-1zM906 200h1V202h-1zM914 198h1V200h-1zM916 207h1V208h-1zM919 199h1V200h-1zM929 199h1V201h-1zM931 208h1V210h-1zM932 199h1V200h-1zM933 206h1V208h-1zM934 206h1V208h-1zM935 198h1V200h-1zM939 204h1V205h-1zM942 193h1V194h-1zM946 193h1V194h-1zM949 195h1V196h-1zM954 196h1V198h-1zM961 199h1V201h-1zM964 207h1V208h-1zM965 207h1V209h-1zM968 197h1V198h-1zM971 195h1V197h-1zM972 196h1V197h-1zM976 193h1V195h-1zM978 193h1V194h-1zM979 201h1V203h-1zM984 192h1V194h-1zM987 197h1V198h-1zM990 197h1V199h-1zM991 206h1V208h-1zM993 204h1V205h-1zM994 195h1V196h-1zM1000 191h1V193h-1zM1001 199h1V201h-1zM1002 201h1V203h-1zM1003 192h1V194h-1zM1005 201h1V203h-1zM1006 193h1V194h-1zM1007 193h1V195h-1zM1009 202h1V203h-1zM1010 194h1V195h-1zM1013 205h1V207h-1zM1014 199h1V200h-1zM1015 207h1V208h-1zM1017 198h1V199h-1zM1018 198h1V199h-1z"/><path fill="url(#pm)" d="M21 170h1V177h-1zM22 170h1V177h-1zM23 170h1V176h-1zM24 170h1V177h-1zM25 170h1V177h-1zM26 170h1V177h-1zM27 170h1V177h-1zM28 170h1V177h-1zM29 170h1V177h-1zM30 170h1V177h-1zM31 170h1V177h-1zM32 170h1V177h-1zM33 170h1V177h-1zM34 170h1V177h-1zM35 170h1V177h-1zM36 170h1V177h-1zM37 170h1V177h-1zM38 170h1V177h-1zM39 171h1V177h-1zM40 170h1V177h-1zM41 170h1V177h-1zM42 170h1V177h-1zM43 170h1V178h-1zM44 170h1V178h-1zM45 170h1V177h-1zM46 170h1V177h-1zM47 170h1V177h-1zM48 170h1V177h-1zM49 170h1V177h-1zM50 170h1V177h-1zM51 170h1V177h-1zM52 171h1V177h-1zM53 170h1V176h-1zM54 170h1V177h-1zM55 171h1V178h-1zM56 172h1V177h-1zM57 170h1V177h-1zM58 170h1V176h-1zM59 170h1V177h-1zM60 170h1V177h-1zM61 170h1V177h-1zM62 170h1V177h-1zM63 170h1V177h-1zM64 170h1V176h-1zM65 170h1V177h-1zM66 171h1V176h-1zM67 170h1V176h-1zM68 170h1V177h-1zM69 171h1V177h-1zM70 170h1V177h-1zM71 170h1V176h-1zM72 170h1V177h-1zM73 170h1V177h-1zM74 170h1V177h-1zM75 169h1V176h-1zM76 169h1V176h-1zM77 169h1V176h-1zM78 169h1V176h-1zM79 169h1V176h-1zM80 170h1V177h-1zM81 170h1V177h-1zM82 170h1V177h-1zM83 170h1V176h-1zM84 170h1V177h-1zM85 170h1V177h-1zM86 171h1V177h-1zM87 170h1V177h-1zM88 170h1V177h-1zM89 170h1V177h-1zM90 170h1V177h-1zM91 170h1V178h-1zM92 171h1V177h-1zM93 171h1V178h-1zM94 171h1V178h-1zM95 172h1V178h-1zM96 171h1V178h-1zM97 170h1V178h-1zM98 170h1V177h-1zM99 170h1V177h-1zM100 170h1V176h-1zM101 170h1V177h-1zM102 170h1V177h-1zM103 170h1V177h-1zM104 170h1V177h-1zM105 170h1V177h-1zM106 171h1V177h-1zM107 170h1V177h-1zM108 170h1V177h-1zM109 170h1V176h-1zM110 170h1V177h-1zM111 170h1V177h-1zM112 171h1V176h-1zM113 170h1V177h-1zM114 170h1V177h-1zM115 170h1V178h-1zM116 171h1V178h-1zM117 170h1V178h-1zM118 170h1V177h-1zM119 170h1V177h-1zM120 170h1V177h-1zM121 170h1V177h-1zM122 169h1V176h-1zM123 169h1V176h-1zM124 169h1V175h-1zM125 169h1V176h-1zM126 170h1V176h-1zM127 169h1V177h-1zM128 170h1V177h-1zM129 170h1V176h-1zM130 170h1V177h-1zM131 170h1V178h-1zM132 171h1V177h-1zM133 170h1V177h-1zM134 170h1V176h-1zM135 170h1V176h-1zM136 170h1V176h-1zM137 170h1V177h-1zM138 171h1V177h-1zM139 170h1V177h-1zM140 170h1V177h-1zM141 170h1V177h-1zM142 170h1V177h-1zM143 170h1V177h-1zM144 170h1V177h-1zM145 170h1V177h-1zM146 171h1V178h-1zM147 171h1V178h-1zM148 171h1V178h-1zM149 171h1V178h-1zM150 171h1V178h-1zM151 171h1V178h-1zM152 172h1V178h-1zM153 171h1V178h-1zM154 171h1V178h-1zM155 172h1V178h-1zM156 170h1V177h-1zM157 171h1V177h-1zM158 170h1V177h-1zM159 170h1V177h-1zM160 170h1V177h-1zM161 170h1V177h-1zM162 170h1V177h-1zM163 170h1V177h-1zM164 171h1V178h-1zM165 172h1V178h-1zM166 171h1V178h-1zM167 171h1V178h-1zM168 171h1V177h-1zM169 172h1V178h-1zM170 171h1V178h-1zM171 171h1V177h-1zM172 171h1V178h-1zM173 171h1V178h-1zM174 171h1V178h-1zM175 172h1V178h-1zM176 171h1V177h-1zM177 171h1V178h-1zM178 171h1V177h-1zM179 172h1V178h-1zM180 173h1V179h-1zM181 171h1V177h-1zM182 171h1V178h-1zM183 171h1V178h-1zM184 170h1V178h-1zM185 171h1V177h-1zM186 170h1V177h-1zM187 170h1V176h-1zM188 170h1V176h-1zM189 169h1V176h-1zM190 169h1V176h-1zM191 169h1V176h-1zM192 169h1V175h-1zM193 170h1V176h-1zM194 169h1V176h-1zM195 170h1V177h-1zM196 170h1V177h-1zM197 170h1V176h-1zM198 170h1V177h-1zM199 170h1V177h-1zM200 170h1V177h-1zM201 170h1V176h-1zM202 170h1V177h-1zM203 170h1V177h-1zM204 170h1V177h-1zM205 170h1V177h-1zM206 170h1V177h-1zM207 170h1V177h-1zM208 170h1V177h-1zM209 170h1V177h-1zM210 170h1V177h-1zM211 170h1V177h-1zM212 170h1V177h-1zM213 170h1V177h-1zM214 170h1V177h-1zM215 170h1V177h-1zM216 170h1V177h-1zM217 170h1V176h-1zM218 170h1V177h-1zM219 170h1V177h-1zM220 170h1V177h-1zM221 170h1V177h-1zM222 170h1V176h-1zM223 170h1V177h-1zM224 170h1V177h-1zM225 170h1V177h-1zM226 170h1V177h-1zM227 170h1V177h-1zM228 170h1V177h-1zM229 171h1V177h-1zM230 170h1V177h-1zM231 170h1V177h-1zM232 170h1V177h-1zM233 170h1V177h-1zM234 171h1V177h-1zM235 170h1V177h-1zM236 170h1V177h-1zM237 170h1V177h-1zM238 170h1V177h-1zM239 170h1V177h-1zM240 170h1V177h-1zM241 171h1V178h-1zM242 171h1V178h-1zM243 171h1V177h-1zM244 171h1V177h-1zM245 170h1V178h-1zM246 170h1V177h-1zM247 170h1V177h-1zM248 170h1V177h-1zM249 170h1V176h-1zM250 170h1V176h-1zM251 170h1V177h-1zM252 170h1V177h-1zM253 170h1V177h-1zM254 170h1V176h-1zM255 171h1V177h-1zM256 171h1V178h-1zM257 171h1V178h-1zM258 171h1V178h-1zM259 171h1V178h-1zM260 171h1V177h-1zM261 171h1V178h-1zM262 171h1V179h-1zM263 172h1V179h-1zM264 172h1V179h-1zM265 171h1V177h-1zM266 170h1V177h-1zM267 170h1V177h-1zM268 170h1V177h-1zM269 170h1V177h-1zM270 170h1V178h-1zM271 171h1V178h-1zM272 171h1V178h-1zM273 170h1V178h-1zM274 170h1V177h-1zM275 170h1V177h-1zM276 170h1V177h-1zM277 170h1V177h-1zM278 170h1V177h-1zM279 170h1V177h-1zM280 170h1V177h-1zM281 170h1V176h-1zM282 170h1V177h-1zM283 170h1V177h-1zM284 170h1V177h-1zM285 170h1V176h-1zM286 170h1V177h-1zM287 170h1V177h-1zM288 170h1V177h-1zM289 170h1V178h-1zM290 172h1V178h-1zM291 171h1V178h-1zM292 171h1V178h-1zM293 171h1V178h-1zM294 171h1V178h-1zM295 172h1V178h-1zM296 171h1V178h-1zM297 170h1V177h-1zM298 170h1V177h-1zM299 170h1V177h-1zM300 170h1V176h-1zM301 171h1V177h-1zM302 170h1V177h-1zM303 170h1V177h-1zM304 170h1V176h-1zM305 170h1V177h-1zM306 170h1V178h-1zM307 171h1V177h-1zM308 170h1V178h-1zM309 170h1V177h-1zM310 170h1V177h-1zM311 170h1V177h-1zM312 170h1V176h-1zM313 170h1V177h-1zM314 170h1V176h-1zM315 171h1V177h-1zM316 170h1V176h-1zM317 170h1V177h-1zM318 170h1V177h-1zM319 170h1V178h-1zM320 171h1V177h-1zM321 171h1V178h-1zM322 171h1V178h-1zM323 171h1V177h-1zM324 171h1V178h-1zM325 171h1V178h-1zM326 170h1V178h-1zM327 170h1V177h-1zM328 172h1V178h-1zM329 172h1V178h-1zM330 171h1V178h-1zM331 171h1V178h-1zM332 171h1V178h-1zM333 171h1V178h-1zM334 171h1V178h-1zM335 171h1V178h-1zM336 171h1V178h-1zM337 171h1V178h-1zM338 172h1V178h-1zM339 171h1V178h-1zM340 172h1V178h-1zM341 170h1V178h-1zM342 171h1V178h-1zM343 171h1V178h-1zM344 171h1V178h-1zM345 171h1V178h-1zM346 171h1V178h-1zM347 171h1V177h-1zM348 172h1V178h-1zM349 171h1V178h-1zM350 171h1V178h-1zM351 170h1V178h-1zM352 170h1V177h-1zM353 170h1V177h-1zM354 170h1V177h-1zM355 170h1V176h-1zM358 182h1V189h-1zM359 182h1V189h-1zM360 182h1V189h-1zM361 182h1V189h-1zM362 182h1V189h-1zM363 181h1V188h-1zM364 179h1V188h-1zM365 178h1V186h-1zM366 177h1V185h-1zM367 177h1V184h-1zM368 177h1V184h-1zM369 177h1V184h-1zM370 177h1V185h-1zM371 179h1V185h-1zM372 178h1V185h-1zM373 178h1V186h-1zM374 179h1V187h-1zM375 181h1V189h-1zM376 181h1V189h-1zM377 182h1V189h-1zM378 180h1V188h-1zM379 179h1V187h-1zM380 178h1V186h-1zM381 177h1V185h-1zM382 175h1V183h-1zM383 175h1V183h-1zM384 177h1V184h-1zM385 178h1V186h-1zM386 179h1V186h-1zM387 179h1V186h-1zM388 178h1V184h-1zM389 176h1V182h-1zM390 175h1V181h-1zM391 175h1V182h-1zM392 177h1V183h-1zM393 179h1V185h-1zM400 178h1V185h-1zM401 176h1V182h-1zM402 174h1V181h-1zM403 173h1V180h-1zM404 172h1V180h-1zM405 172h1V179h-1zM406 173h1V179h-1zM407 172h1V179h-1zM408 172h1V179h-1zM409 172h1V179h-1zM410 172h1V179h-1zM411 173h1V180h-1zM412 174h1V182h-1zM413 177h1V185h-1zM414 179h1V185h-1zM415 178h1V183h-1zM416 175h1V181h-1zM417 173h1V179h-1zM418 172h1V179h-1zM419 172h1V178h-1zM420 171h1V179h-1zM421 171h1V178h-1zM422 171h1V178h-1zM423 171h1V178h-1zM424 172h1V178h-1zM425 172h1V178h-1zM426 171h1V178h-1zM427 170h1V178h-1zM428 172h1V178h-1zM429 171h1V178h-1zM430 171h1V178h-1zM431 173h1V179h-1zM432 172h1V179h-1zM433 172h1V180h-1zM434 173h1V180h-1zM435 173h1V180h-1zM436 173h1V180h-1zM437 173h1V180h-1zM438 173h1V180h-1zM439 173h1V180h-1zM440 174h1V180h-1zM441 173h1V180h-1zM442 173h1V180h-1zM443 173h1V180h-1zM444 173h1V179h-1zM445 173h1V180h-1zM446 172h1V180h-1zM447 172h1V179h-1zM448 173h1V179h-1zM449 172h1V178h-1zM450 172h1V178h-1zM451 173h1V179h-1zM452 173h1V179h-1zM453 175h1V182h-1zM454 177h1V183h-1zM455 178h1V185h-1zM456 178h1V186h-1zM457 179h1V187h-1zM458 180h1V187h-1zM459 181h1V188h-1zM460 181h1V189h-1zM461 182h1V189h-1zM462 182h1V189h-1zM463 183h1V190h-1zM470 188h1V195h-1zM471 186h1V193h-1zM472 185h1V191h-1zM473 183h1V189h-1zM474 183h1V191h-1zM475 186h1V193h-1zM476 189h1V194h-1zM477 187h1V195h-1zM478 184h1V192h-1zM479 181h1V189h-1zM480 179h1V186h-1zM481 177h1V184h-1zM482 174h1V180h-1zM483 173h1V181h-1zM484 176h1V183h-1zM485 179h1V186h-1zM486 181h1V188h-1zM487 183h1V189h-1zM488 185h1V191h-1zM489 183h1V189h-1zM490 182h1V189h-1zM491 181h1V187h-1zM492 179h1V187h-1zM493 178h1V186h-1zM494 179h1V186h-1zM495 181h1V188h-1zM496 184h1V191h-1zM497 186h1V194h-1zM498 187h1V193h-1zM499 184h1V191h-1zM500 180h1V188h-1zM501 178h1V185h-1zM502 175h1V181h-1zM503 172h1V180h-1zM504 172h1V178h-1zM505 174h1V182h-1zM506 177h1V184h-1zM507 179h1V186h-1zM508 182h1V188h-1zM509 184h1V192h-1zM510 187h1V195h-1zM511 190h1V198h-1zM513 198h1V205h-1zM518 181h1V187h-1zM519 182h1V189h-1zM520 185h1V190h-1zM584 337h1V345h-1zM585 334h1V342h-1zM586 332h1V339h-1zM587 327h1V335h-1zM588 324h1V332h-1zM589 321h1V329h-1zM590 318h1V326h-1zM591 315h1V323h-1zM609 213h1V220h-1zM610 211h1V218h-1zM611 209h1V215h-1zM612 208h1V214h-1zM613 206h1V214h-1zM614 205h1V210h-1zM615 203h1V211h-1zM616 202h1V210h-1zM617 202h1V209h-1zM618 201h1V208h-1zM619 200h1V207h-1zM620 200h1V205h-1zM621 199h1V206h-1zM622 199h1V206h-1zM623 200h1V206h-1zM624 199h1V206h-1zM625 198h1V206h-1zM626 198h1V205h-1zM627 198h1V205h-1zM628 198h1V205h-1zM629 198h1V204h-1zM630 197h1V204h-1zM631 197h1V204h-1zM632 198h1V204h-1zM633 197h1V204h-1zM634 197h1V204h-1zM635 197h1V204h-1zM636 197h1V205h-1zM637 198h1V205h-1zM638 198h1V205h-1zM639 198h1V205h-1zM640 199h1V205h-1zM641 198h1V205h-1zM642 198h1V205h-1zM643 197h1V205h-1zM644 197h1V205h-1zM645 198h1V205h-1zM646 199h1V205h-1zM647 199h1V207h-1zM648 200h1V207h-1zM649 200h1V206h-1zM650 201h1V207h-1zM651 200h1V207h-1zM652 200h1V207h-1zM653 201h1V207h-1zM654 200h1V207h-1zM655 201h1V207h-1zM656 200h1V207h-1zM657 200h1V206h-1zM658 200h1V208h-1zM659 201h1V207h-1zM660 200h1V207h-1zM661 199h1V206h-1zM662 199h1V206h-1zM663 199h1V206h-1zM664 200h1V207h-1zM665 200h1V207h-1zM666 200h1V206h-1zM667 200h1V208h-1zM668 201h1V208h-1zM669 201h1V209h-1zM670 203h1V209h-1zM671 203h1V208h-1zM672 202h1V209h-1zM673 203h1V210h-1zM674 203h1V210h-1zM675 203h1V210h-1zM676 204h1V211h-1zM677 205h1V211h-1zM678 205h1V211h-1zM679 204h1V212h-1zM680 205h1V212h-1zM681 206h1V212h-1zM682 206h1V214h-1zM683 208h1V215h-1zM684 208h1V216h-1zM685 209h1V216h-1zM686 209h1V217h-1zM687 211h1V217h-1zM688 210h1V216h-1zM689 211h1V218h-1zM690 211h1V218h-1zM691 211h1V219h-1zM692 213h1V220h-1zM693 216h1V222h-1zM694 217h1V222h-1zM695 218h1V225h-1zM696 220h1V228h-1zM697 223h1V231h-1zM698 226h1V233h-1zM699 229h1V236h-1zM700 232h1V238h-1zM701 236h1V242h-1zM702 237h1V245h-1zM703 240h1V248h-1zM704 243h1V251h-1zM705 246h1V253h-1zM706 248h1V256h-1zM707 251h1V258h-1zM708 254h1V260h-1zM709 256h1V263h-1zM710 258h1V266h-1zM711 261h1V267h-1zM712 263h1V269h-1zM713 266h1V271h-1zM714 267h1V274h-1zM715 269h1V276h-1zM716 271h1V279h-1zM717 274h1V281h-1zM718 276h1V282h-1zM719 278h1V285h-1zM720 281h1V289h-1zM721 282h1V289h-1zM722 283h1V289h-1zM723 282h1V289h-1zM724 281h1V289h-1zM725 282h1V289h-1zM726 282h1V289h-1zM727 282h1V289h-1zM728 283h1V290h-1zM729 281h1V289h-1zM730 280h1V288h-1zM731 279h1V286h-1zM732 277h1V284h-1zM733 275h1V282h-1zM734 274h1V279h-1zM735 271h1V277h-1zM736 268h1V276h-1zM737 267h1V275h-1zM738 266h1V274h-1zM739 265h1V272h-1zM740 262h1V270h-1zM741 259h1V267h-1zM742 257h1V264h-1zM743 253h1V261h-1zM744 251h1V257h-1zM745 247h1V254h-1zM746 245h1V252h-1zM747 243h1V249h-1zM748 241h1V247h-1zM749 238h1V245h-1zM750 236h1V243h-1zM751 234h1V241h-1zM752 233h1V238h-1zM753 231h1V238h-1zM754 231h1V236h-1zM755 228h1V236h-1zM756 227h1V234h-1zM757 225h1V232h-1zM758 223h1V230h-1zM759 221h1V228h-1zM760 219h1V225h-1zM761 217h1V224h-1zM762 217h1V224h-1zM763 216h1V224h-1zM764 216h1V223h-1zM765 216h1V223h-1zM766 216h1V223h-1zM767 217h1V223h-1zM768 215h1V222h-1zM769 216h1V222h-1zM770 214h1V221h-1zM771 214h1V221h-1zM772 214h1V221h-1zM773 214h1V221h-1zM774 215h1V221h-1zM775 214h1V221h-1zM776 213h1V221h-1zM777 213h1V220h-1zM778 212h1V220h-1zM779 212h1V219h-1zM780 212h1V219h-1zM781 212h1V219h-1zM782 212h1V219h-1zM783 212h1V219h-1zM784 211h1V219h-1zM785 210h1V218h-1zM786 209h1V217h-1zM787 208h1V216h-1zM788 209h1V215h-1zM789 208h1V215h-1zM790 209h1V215h-1zM791 208h1V215h-1zM792 208h1V215h-1zM793 208h1V215h-1zM794 207h1V214h-1zM795 207h1V214h-1zM796 206h1V213h-1zM797 206h1V213h-1zM798 206h1V213h-1zM799 205h1V211h-1zM800 205h1V213h-1zM801 206h1V213h-1zM802 206h1V214h-1zM803 207h1V214h-1zM804 207h1V214h-1zM805 207h1V214h-1zM806 206h1V213h-1zM807 206h1V213h-1zM808 207h1V213h-1zM809 206h1V213h-1zM810 206h1V213h-1zM811 207h1V214h-1zM812 208h1V214h-1zM813 206h1V213h-1zM814 206h1V213h-1zM815 205h1V213h-1zM816 205h1V213h-1zM817 207h1V212h-1zM818 207h1V213h-1zM819 206h1V214h-1zM820 207h1V214h-1zM821 207h1V214h-1zM822 207h1V213h-1zM823 207h1V214h-1zM824 207h1V214h-1zM825 207h1V214h-1zM826 207h1V214h-1zM827 206h1V214h-1zM828 206h1V213h-1zM829 206h1V213h-1zM830 205h1V213h-1zM831 204h1V212h-1zM832 205h1V211h-1zM833 205h1V211h-1zM834 205h1V211h-1zM835 203h1V210h-1zM836 203h1V210h-1zM837 203h1V210h-1zM838 202h1V210h-1zM839 202h1V208h-1zM840 202h1V209h-1zM841 201h1V208h-1zM842 201h1V209h-1zM843 201h1V208h-1zM844 200h1V207h-1zM845 199h1V207h-1zM846 199h1V206h-1zM847 200h1V206h-1zM848 199h1V206h-1zM849 200h1V206h-1zM850 199h1V205h-1zM851 199h1V206h-1zM852 199h1V206h-1zM853 198h1V207h-1zM854 200h1V208h-1zM855 203h1V210h-1zM856 204h1V211h-1zM857 205h1V212h-1zM858 205h1V212h-1zM859 206h1V211h-1zM860 203h1V211h-1zM861 201h1V209h-1zM862 201h1V208h-1zM863 199h1V206h-1zM864 198h1V206h-1zM865 198h1V204h-1zM866 198h1V205h-1zM867 198h1V205h-1zM868 198h1V205h-1zM869 198h1V205h-1zM870 198h1V205h-1zM871 198h1V205h-1zM872 198h1V205h-1zM873 198h1V204h-1zM874 199h1V205h-1zM875 198h1V205h-1zM876 198h1V205h-1zM877 198h1V205h-1zM878 198h1V204h-1zM879 198h1V206h-1zM880 200h1V206h-1zM881 199h1V207h-1zM882 201h1V208h-1zM883 201h1V208h-1zM884 201h1V209h-1zM885 203h1V209h-1zM886 202h1V210h-1zM887 203h1V210h-1zM888 203h1V210h-1zM889 202h1V210h-1zM890 202h1V209h-1zM891 201h1V209h-1zM892 201h1V208h-1zM893 200h1V207h-1zM894 200h1V207h-1zM895 199h1V207h-1zM896 198h1V206h-1zM897 198h1V206h-1zM898 198h1V205h-1zM899 198h1V206h-1zM900 199h1V206h-1zM901 200h1V208h-1zM902 201h1V208h-1zM903 202h1V210h-1zM904 202h1V210h-1zM905 203h1V209h-1zM906 202h1V209h-1zM907 201h1V209h-1zM908 200h1V208h-1zM909 200h1V207h-1zM910 200h1V207h-1zM911 201h1V206h-1zM912 201h1V207h-1zM913 201h1V207h-1zM914 200h1V207h-1zM915 200h1V207h-1zM916 200h1V207h-1zM917 199h1V207h-1zM918 200h1V207h-1zM919 200h1V206h-1zM920 199h1V207h-1zM921 199h1V206h-1zM922 199h1V205h-1zM923 198h1V206h-1zM924 198h1V205h-1zM925 199h1V206h-1zM926 199h1V207h-1zM927 200h1V207h-1zM928 200h1V207h-1zM929 201h1V207h-1zM930 201h1V207h-1zM931 202h1V208h-1zM932 200h1V208h-1zM933 200h1V206h-1zM934 200h1V206h-1zM935 200h1V207h-1zM936 199h1V207h-1zM937 199h1V205h-1zM938 198h1V205h-1zM939 196h1V204h-1zM940 195h1V203h-1zM941 195h1V202h-1zM942 194h1V201h-1zM943 194h1V201h-1zM944 194h1V201h-1zM945 195h1V202h-1zM946 194h1V202h-1zM947 195h1V201h-1zM948 195h1V203h-1zM949 196h1V203h-1zM950 195h1V203h-1zM951 197h1V204h-1zM952 197h1V204h-1zM953 198h1V205h-1zM954 198h1V206h-1zM955 199h1V207h-1zM956 200h1V207h-1zM957 200h1V207h-1zM958 201h1V209h-1zM959 202h1V209h-1zM960 202h1V209h-1zM961 201h1V209h-1zM962 201h1V208h-1zM963 200h1V208h-1zM964 200h1V207h-1zM965 199h1V207h-1zM966 199h1V206h-1zM967 197h1V205h-1zM968 198h1V204h-1zM969 197h1V204h-1zM970 197h1V204h-1zM971 197h1V204h-1zM972 197h1V204h-1zM973 197h1V203h-1zM974 197h1V203h-1zM975 196h1V203h-1zM976 195h1V203h-1zM977 196h1V202h-1zM978 194h1V202h-1zM979 194h1V201h-1zM980 193h1V201h-1zM981 193h1V200h-1zM982 193h1V200h-1zM983 193h1V201h-1zM984 194h1V202h-1zM985 196h1V204h-1zM986 197h1V205h-1zM987 198h1V206h-1zM988 200h1V207h-1zM989 200h1V207h-1zM990 199h1V207h-1zM991 198h1V206h-1zM992 198h1V205h-1zM993 197h1V204h-1zM994 196h1V204h-1zM995 196h1V203h-1zM996 195h1V203h-1zM997 195h1V202h-1zM998 194h1V202h-1zM999 194h1V201h-1zM1000 193h1V201h-1zM1001 193h1V199h-1zM1002 193h1V201h-1zM1003 194h1V200h-1zM1004 194h1V201h-1zM1005 194h1V201h-1zM1006 194h1V200h-1zM1007 195h1V201h-1zM1008 194h1V201h-1zM1009 195h1V202h-1zM1010 195h1V202h-1zM1011 195h1V203h-1zM1012 197h1V203h-1zM1013 198h1V205h-1zM1014 200h1V206h-1zM1015 200h1V207h-1zM1016 199h1V207h-1zM1017 199h1V206h-1zM1018 199h1V206h-1zM1019 199h1V206h-1zM1020 199h1V204h-1z"/><path fill="#ff00ff" d="M22 173h1V174h-1zM23 173h1V174h-1zM24 172h1V173h-1zM25 173h1V174h-1zM26 174h1V175h-1zM28 173h1V174h-1zM29 173h1V174h-1zM34 173h1V174h-1zM35 173h1V174h-1zM36 174h1V175h-1zM37 173h1V174h-1zM39 173h1V174h-1zM40 172h1V173h-1zM42 172h1V173h-1zM44 173h1V174h-1zM45 173h1V174h-1zM47 174h1V175h-1zM48 173h1V174h-1zM50 173h1V174h-1zM51 172h1V173h-1zM52 173h1V174h-1zM53 173h1V174h-1zM55 173h1V174h-1zM56 175h1V176h-1zM57 173h1V174h-1zM58 173h1V174h-1zM59 174h1V175h-1zM60 173h1V174h-1zM61 173h1V174h-1zM63 173h1V174h-1zM64 173h1V174h-1zM65 173h1V174h-1zM66 173h1V174h-1zM67 172h1V173h-1zM69 172h1V173h-1zM72 173h1V174h-1zM73 173h1V174h-1zM74 172h1V173h-1zM75 172h1V173h-1zM76 172h1V173h-1zM77 172h1V173h-1zM78 172h1V173h-1zM79 171h1V172h-1zM80 172h1V173h-1zM84 173h1V174h-1zM85 173h1V174h-1zM86 173h1V174h-1zM87 173h1V174h-1zM88 173h1V174h-1zM91 174h1V175h-1zM92 173h1V174h-1zM93 173h1V174h-1zM94 174h1V175h-1zM95 174h1V175h-1zM97 173h1V174h-1zM98 173h1V174h-1zM99 174h1V175h-1zM100 173h1V174h-1zM101 174h1V175h-1zM102 174h1V175h-1zM103 173h1V174h-1zM105 173h1V174h-1zM106 172h1V173h-1zM110 173h1V174h-1zM111 172h1V173h-1zM112 174h1V175h-1zM113 173h1V174h-1zM114 173h1V174h-1zM115 174h1V175h-1zM116 174h1V175h-1zM117 173h1V174h-1zM120 174h1V175h-1zM121 173h1V174h-1zM122 172h1V173h-1zM123 171h1V172h-1zM125 171h1V172h-1zM127 171h1V172h-1zM128 173h1V174h-1zM130 172h1V173h-1zM131 173h1V174h-1zM132 174h1V175h-1zM133 173h1V174h-1zM135 172h1V173h-1zM136 173h1V174h-1zM138 173h1V174h-1zM139 173h1V174h-1zM140 174h1V175h-1zM141 172h1V173h-1zM143 172h1V173h-1zM144 173h1V174h-1zM145 172h1V173h-1zM146 173h1V174h-1zM147 173h1V174h-1zM149 174h1V175h-1zM151 173h1V174h-1zM152 174h1V175h-1zM153 174h1V175h-1zM154 174h1V175h-1zM155 174h1V175h-1zM156 173h1V174h-1zM157 174h1V175h-1zM158 173h1V174h-1zM159 173h1V174h-1zM160 174h1V175h-1zM161 172h1V173h-1zM162 174h1V175h-1zM163 173h1V174h-1zM165 174h1V175h-1zM166 173h1V174h-1zM167 174h1V175h-1zM168 174h1V175h-1zM169 175h1V176h-1zM170 175h1V176h-1zM171 174h1V175h-1zM172 174h1V175h-1zM173 173h1V174h-1zM174 173h1V174h-1zM175 174h1V175h-1zM178 175h1V176h-1zM179 173h1V174h-1zM181 174h1V175h-1zM182 174h1V175h-1zM183 174h1V175h-1zM185 174h1V175h-1zM186 174h1V175h-1zM187 172h1V173h-1zM188 171h1V172h-1zM189 172h1V173h-1zM191 172h1V173h-1zM192 172h1V173h-1zM193 171h1V172h-1zM194 172h1V173h-1zM195 174h1V175h-1zM196 173h1V174h-1zM197 173h1V174h-1zM198 173h1V174h-1zM199 173h1V174h-1zM200 173h1V174h-1zM202 173h1V174h-1zM203 174h1V175h-1zM205 173h1V174h-1zM206 173h1V174h-1zM207 174h1V175h-1zM208 172h1V173h-1zM209 173h1V174h-1zM210 173h1V174h-1zM211 172h1V173h-1zM212 173h1V174h-1zM213 172h1V173h-1zM214 173h1V174h-1zM215 174h1V175h-1zM216 173h1V174h-1zM217 172h1V173h-1zM218 172h1V173h-1zM220 173h1V174h-1zM221 172h1V173h-1zM222 173h1V174h-1zM223 172h1V173h-1zM224 173h1V174h-1zM225 173h1V174h-1zM226 173h1V174h-1zM227 173h1V174h-1zM228 174h1V175h-1zM229 173h1V174h-1zM230 173h1V174h-1zM231 173h1V174h-1zM232 173h1V174h-1zM233 173h1V174h-1zM234 173h1V174h-1zM235 173h1V174h-1zM236 173h1V174h-1zM240 173h1V174h-1zM242 174h1V175h-1zM243 175h1V176h-1zM246 173h1V174h-1zM249 173h1V174h-1zM250 172h1V173h-1zM251 173h1V174h-1zM257 173h1V174h-1zM258 173h1V174h-1zM259 175h1V176h-1zM260 175h1V176h-1zM262 174h1V175h-1zM263 174h1V175h-1zM264 176h1V177h-1zM265 173h1V174h-1zM267 172h1V173h-1zM269 173h1V174h-1zM270 172h1V173h-1zM271 174h1V175h-1zM272 174h1V175h-1zM273 173h1V174h-1zM274 172h1V173h-1zM275 174h1V175h-1zM276 174h1V175h-1zM277 172h1V173h-1zM278 173h1V174h-1zM279 174h1V175h-1zM280 173h1V174h-1zM281 173h1V174h-1zM282 172h1V173h-1zM284 172h1V173h-1zM285 172h1V173h-1zM286 174h1V175h-1zM288 174h1V175h-1zM289 173h1V174h-1zM290 174h1V175h-1zM291 174h1V175h-1zM294 174h1V175h-1zM296 173h1V174h-1zM297 174h1V175h-1zM299 172h1V173h-1zM300 174h1V175h-1zM301 173h1V174h-1zM302 174h1V175h-1zM304 173h1V174h-1zM306 172h1V173h-1zM307 174h1V175h-1zM308 173h1V174h-1zM309 174h1V175h-1zM310 174h1V175h-1zM312 173h1V174h-1zM313 172h1V173h-1zM314 173h1V174h-1zM315 173h1V174h-1zM317 172h1V173h-1zM319 172h1V173h-1zM320 174h1V175h-1zM321 175h1V176h-1zM322 173h1V174h-1zM324 174h1V175h-1zM325 174h1V175h-1zM326 173h1V174h-1zM327 173h1V174h-1zM328 174h1V175h-1zM329 175h1V176h-1zM330 173h1V174h-1zM332 173h1V174h-1zM335 175h1V176h-1zM336 174h1V175h-1zM337 175h1V176h-1zM338 173h1V174h-1zM339 175h1V176h-1zM340 175h1V176h-1zM341 173h1V174h-1zM342 173h1V174h-1zM344 174h1V175h-1zM346 174h1V175h-1zM347 175h1V176h-1zM348 174h1V175h-1zM350 174h1V175h-1zM351 174h1V175h-1zM353 173h1V174h-1zM354 173h1V174h-1zM355 173h1V174h-1zM358 185h1V186h-1zM359 185h1V186h-1zM360 185h1V186h-1zM361 185h1V186h-1zM362 184h1V185h-1zM363 183h1V184h-1zM367 180h1V181h-1zM368 180h1V181h-1zM369 181h1V182h-1zM370 181h1V182h-1zM371 181h1V182h-1zM372 181h1V182h-1zM373 180h1V181h-1zM375 183h1V184h-1zM376 184h1V185h-1zM377 184h1V185h-1zM378 183h1V184h-1zM379 183h1V184h-1zM380 181h1V182h-1zM382 178h1V179h-1zM383 177h1V178h-1zM384 180h1V181h-1zM387 181h1V182h-1zM388 180h1V181h-1zM389 178h1V179h-1zM391 177h1V180h-1zM392 179h1V180h-1zM393 182h1V183h-1zM400 179h1V180h-1zM401 178h1V179h-1zM403 177h1V178h-1zM404 176h1V177h-1zM405 175h1V176h-1zM406 176h1V177h-1zM407 176h1V177h-1zM408 175h1V176h-1zM409 175h1V176h-1zM410 175h1V176h-1zM411 175h1V176h-1zM412 177h1V180h-1zM413 179h1V183h-1zM414 181h1V182h-1zM416 176h1V177h-1zM418 175h1V176h-1zM419 174h1V175h-1zM420 174h1V175h-1zM421 174h1V175h-1zM422 174h1V175h-1zM423 175h1V176h-1zM424 173h1V174h-1zM427 174h1V175h-1zM428 174h1V175h-1zM430 174h1V175h-1zM431 176h1V177h-1zM432 174h1V175h-1zM433 176h1V177h-1zM434 176h1V177h-1zM435 176h1V177h-1zM436 175h1V176h-1zM437 176h1V177h-1zM439 176h1V177h-1zM440 176h1V177h-1zM442 176h1V177h-1zM443 176h1V177h-1zM444 175h1V176h-1zM445 177h1V178h-1zM446 175h1V176h-1zM448 175h1V176h-1zM449 176h1V177h-1zM450 176h1V177h-1zM453 177h1V178h-1zM454 180h1V181h-1zM455 179h1V180h-1zM456 181h1V182h-1zM457 182h1V183h-1zM459 183h1V184h-1zM461 186h1V187h-1zM462 185h1V186h-1zM463 186h1V187h-1zM470 189h1V190h-1zM472 188h1V189h-1zM473 184h1V185h-1zM474 185h1V189h-1zM475 188h1V191h-1zM476 191h1V192h-1zM478 186h1V190h-1zM480 182h1V184h-1zM483 175h1V179h-1zM485 181h1V184h-1zM486 183h1V186h-1zM487 186h1V188h-1zM488 186h1V187h-1zM489 185h1V186h-1zM491 183h1V184h-1zM492 182h1V183h-1zM493 182h1V183h-1zM494 182h1V184h-1zM495 183h1V187h-1zM496 186h1V189h-1zM498 188h1V192h-1zM499 185h1V189h-1zM500 182h1V186h-1zM501 179h1V183h-1zM503 174h1V178h-1zM504 174h1V177h-1zM505 176h1V180h-1zM506 179h1V182h-1zM508 184h1V185h-1zM509 187h1V190h-1zM510 189h1V193h-1zM511 191h1V196h-1zM513 200h1V203h-1zM519 183h1V184h-1zM520 186h1V187h-1zM585 336h1V340h-1zM586 334h1V337h-1zM587 330h1V333h-1zM588 327h1V330h-1zM590 320h1V324h-1zM609 215h1V218h-1zM611 210h1V214h-1zM612 211h1V212h-1zM613 209h1V210h-1zM614 207h1V208h-1zM615 206h1V207h-1zM616 204h1V205h-1zM617 203h1V204h-1zM618 203h1V204h-1zM621 202h1V203h-1zM622 202h1V203h-1zM623 202h1V203h-1zM624 203h1V204h-1zM625 201h1V202h-1zM626 200h1V201h-1zM627 202h1V203h-1zM630 200h1V201h-1zM631 200h1V201h-1zM632 200h1V201h-1zM633 200h1V201h-1zM634 200h1V201h-1zM636 201h1V202h-1zM638 200h1V201h-1zM639 202h1V203h-1zM640 202h1V203h-1zM641 201h1V202h-1zM643 199h1V200h-1zM644 201h1V202h-1zM646 202h1V203h-1zM647 202h1V203h-1zM649 202h1V203h-1zM650 204h1V205h-1zM651 203h1V204h-1zM652 202h1V203h-1zM653 203h1V204h-1zM654 204h1V205h-1zM655 203h1V204h-1zM656 203h1V204h-1zM657 203h1V204h-1zM658 203h1V204h-1zM659 203h1V204h-1zM660 203h1V204h-1zM661 201h1V202h-1zM664 204h1V205h-1zM665 203h1V204h-1zM666 203h1V204h-1zM667 203h1V204h-1zM668 204h1V205h-1zM672 204h1V205h-1zM673 207h1V208h-1zM674 205h1V206h-1zM675 205h1V206h-1zM676 207h1V208h-1zM678 207h1V208h-1zM679 207h1V208h-1zM680 208h1V209h-1zM681 210h1V211h-1zM682 208h1V209h-1zM683 210h1V211h-1zM684 210h1V211h-1zM685 211h1V212h-1zM687 213h1V214h-1zM688 213h1V214h-1zM689 213h1V214h-1zM690 213h1V214h-1zM692 216h1V217h-1zM693 218h1V219h-1zM694 218h1V219h-1zM696 223h1V226h-1zM697 225h1V229h-1zM698 228h1V231h-1zM699 232h1V235h-1zM702 239h1V243h-1zM703 242h1V246h-1zM705 249h1V251h-1zM706 250h1V254h-1zM707 254h1V256h-1zM709 258h1V261h-1zM710 260h1V264h-1zM712 265h1V266h-1zM713 267h1V268h-1zM714 270h1V271h-1zM716 273h1V277h-1zM717 277h1V279h-1zM718 278h1V281h-1zM719 280h1V283h-1zM720 284h1V287h-1zM721 285h1V286h-1zM722 285h1V286h-1zM723 285h1V286h-1zM725 286h1V287h-1zM726 285h1V286h-1zM727 286h1V287h-1zM728 284h1V285h-1zM729 284h1V285h-1zM730 283h1V284h-1zM731 281h1V284h-1zM732 278h1V279h-1zM734 275h1V276h-1zM736 270h1V271h-1zM738 269h1V270h-1zM740 264h1V268h-1zM741 260h1V265h-1zM742 257h1V262h-1zM743 256h1V259h-1zM744 252h1V256h-1zM745 250h1V252h-1zM746 246h1V250h-1zM747 245h1V246h-1zM748 244h1V246h-1zM749 240h1V243h-1zM750 238h1V241h-1zM751 236h1V239h-1zM752 234h1V235h-1zM753 234h1V235h-1zM754 233h1V234h-1zM755 232h1V233h-1zM756 229h1V230h-1zM759 222h1V223h-1zM761 220h1V221h-1zM762 219h1V220h-1zM764 220h1V221h-1zM766 220h1V221h-1zM767 219h1V220h-1zM768 218h1V219h-1zM769 218h1V219h-1zM770 218h1V219h-1zM771 217h1V218h-1zM772 218h1V219h-1zM775 216h1V217h-1zM776 217h1V218h-1zM777 217h1V218h-1zM778 216h1V217h-1zM780 216h1V217h-1zM781 215h1V216h-1zM782 215h1V216h-1zM784 213h1V214h-1zM785 213h1V214h-1zM786 212h1V213h-1zM787 211h1V212h-1zM789 210h1V211h-1zM790 211h1V212h-1zM791 211h1V212h-1zM792 210h1V211h-1zM793 210h1V211h-1zM794 210h1V211h-1zM796 209h1V210h-1zM797 210h1V211h-1zM798 209h1V210h-1zM799 208h1V209h-1zM800 207h1V208h-1zM803 210h1V211h-1zM804 210h1V211h-1zM805 211h1V212h-1zM806 209h1V210h-1zM807 209h1V210h-1zM808 208h1V209h-1zM809 209h1V210h-1zM810 210h1V211h-1zM813 209h1V210h-1zM814 209h1V210h-1zM815 208h1V209h-1zM816 209h1V210h-1zM818 208h1V209h-1zM819 209h1V210h-1zM821 210h1V211h-1zM823 210h1V211h-1zM824 210h1V211h-1zM825 210h1V211h-1zM826 210h1V211h-1zM828 208h1V209h-1zM829 210h1V211h-1zM830 209h1V210h-1zM831 207h1V208h-1zM832 207h1V208h-1zM834 207h1V208h-1zM835 206h1V207h-1zM836 205h1V206h-1zM837 207h1V208h-1zM838 205h1V206h-1zM839 205h1V206h-1zM840 204h1V205h-1zM841 204h1V205h-1zM842 204h1V205h-1zM843 205h1V206h-1zM844 203h1V204h-1zM845 201h1V202h-1zM847 202h1V203h-1zM849 201h1V202h-1zM851 202h1V203h-1zM852 201h1V202h-1zM853 201h1V202h-1zM854 203h1V204h-1zM855 206h1V207h-1zM856 206h1V207h-1zM857 208h1V209h-1zM860 206h1V207h-1zM861 204h1V205h-1zM862 203h1V204h-1zM863 201h1V202h-1zM864 202h1V203h-1zM865 201h1V202h-1zM866 202h1V203h-1zM867 201h1V202h-1zM868 202h1V203h-1zM869 202h1V203h-1zM871 201h1V202h-1zM872 201h1V202h-1zM873 202h1V203h-1zM874 201h1V202h-1zM875 202h1V203h-1zM877 201h1V202h-1zM878 201h1V202h-1zM879 200h1V201h-1zM880 202h1V203h-1zM881 202h1V203h-1zM882 202h1V203h-1zM883 204h1V205h-1zM885 205h1V206h-1zM886 205h1V206h-1zM887 206h1V207h-1zM888 206h1V207h-1zM889 205h1V206h-1zM890 205h1V206h-1zM891 205h1V206h-1zM893 203h1V204h-1zM894 203h1V204h-1zM895 202h1V203h-1zM896 201h1V202h-1zM897 200h1V201h-1zM898 201h1V202h-1zM900 202h1V203h-1zM901 203h1V204h-1zM902 204h1V205h-1zM903 205h1V206h-1zM904 205h1V206h-1zM905 205h1V206h-1zM906 205h1V206h-1zM907 204h1V205h-1zM908 203h1V204h-1zM909 203h1V204h-1zM910 203h1V204h-1zM911 203h1V204h-1zM912 204h1V205h-1zM913 203h1V204h-1zM914 203h1V204h-1zM915 203h1V204h-1zM917 201h1V202h-1zM918 204h1V205h-1zM919 203h1V204h-1zM920 202h1V203h-1zM923 202h1V203h-1zM924 201h1V202h-1zM925 203h1V204h-1zM927 203h1V204h-1zM928 203h1V204h-1zM929 203h1V204h-1zM930 203h1V204h-1zM933 203h1V204h-1zM935 203h1V204h-1zM936 202h1V203h-1zM937 200h1V201h-1zM938 200h1V201h-1zM940 199h1V200h-1zM941 199h1V200h-1zM943 197h1V198h-1zM944 197h1V198h-1zM945 198h1V199h-1zM946 197h1V198h-1zM948 198h1V199h-1zM949 198h1V199h-1zM950 199h1V200h-1zM951 199h1V200h-1zM952 200h1V201h-1zM953 200h1V201h-1zM954 201h1V202h-1zM955 202h1V203h-1zM956 203h1V204h-1zM957 204h1V205h-1zM960 204h1V205h-1zM961 204h1V205h-1zM962 204h1V205h-1zM963 203h1V204h-1zM964 203h1V204h-1zM965 202h1V203h-1zM966 202h1V203h-1zM967 200h1V201h-1zM968 200h1V201h-1zM969 200h1V201h-1zM970 201h1V202h-1zM971 199h1V200h-1zM972 201h1V202h-1zM973 201h1V202h-1zM974 199h1V200h-1zM976 198h1V199h-1zM977 198h1V199h-1zM978 196h1V197h-1zM979 197h1V198h-1zM980 196h1V197h-1zM981 196h1V197h-1zM982 196h1V197h-1zM983 196h1V197h-1zM985 200h1V201h-1zM987 202h1V203h-1zM988 203h1V204h-1zM989 204h1V205h-1zM990 203h1V204h-1zM991 201h1V202h-1zM992 201h1V202h-1zM994 198h1V199h-1zM995 199h1V200h-1zM996 199h1V200h-1zM997 199h1V200h-1zM998 197h1V198h-1zM1000 196h1V197h-1zM1002 195h1V196h-1zM1003 198h1V199h-1zM1004 196h1V197h-1zM1005 197h1V198h-1zM1006 197h1V198h-1zM1007 198h1V199h-1zM1008 197h1V198h-1zM1009 197h1V198h-1zM1011 197h1V198h-1zM1012 200h1V201h-1zM1013 201h1V202h-1zM1014 202h1V203h-1zM1015 202h1V203h-1zM1017 202h1V203h-1zM1019 200h1V201h-1z"/><path fill="#b800b8" d="M356 172h1V180h-1zM357 179h1V187h-1zM394 183h1V193h-1zM395 191h1V202h-1zM396 195h1V202h-1zM397 191h1V197h-1zM398 186h1V193h-1zM399 182h1V188h-1zM466 211h1V219h-1zM467 205h1V213h-1zM468 198h1V206h-1zM469 192h1V200h-1zM512 196h1V202h-1zM514 195h1V201h-1zM515 191h1V197h-1zM516 186h1V193h-1zM517 181h1V188h-1zM521 187h1V195h-1zM522 193h1V202h-1zM523 200h1V209h-1zM524 207h1V216h-1zM525 214h1V228h-1zM526 226h1V241h-1zM536 600h1V608h-1zM537 606h1V612h-1zM538 604h1V611h-1zM539 599h1V606h-1zM540 591h1V600h-1zM541 583h1V592h-1zM542 575h1V585h-1zM543 567h1V577h-1zM544 560h1V569h-1zM545 552h1V562h-1zM546 544h1V554h-1zM547 533h1V546h-1zM549 511h1V520h-1zM550 505h1V513h-1zM551 498h1V506h-1zM552 491h1V500h-1zM553 485h1V493h-1zM554 478h1V487h-1zM555 471h1V480h-1zM556 465h1V473h-1zM557 460h1V467h-1zM558 454h1V461h-1zM559 449h1V456h-1zM560 444h1V451h-1zM561 439h1V446h-1zM562 434h1V441h-1zM563 429h1V436h-1zM564 425h1V431h-1zM565 421h1V426h-1zM566 417h1V423h-1zM567 413h1V419h-1zM568 409h1V415h-1zM569 404h1V410h-1zM570 400h1V406h-1zM571 396h1V402h-1zM572 392h1V398h-1zM573 387h1V394h-1zM574 383h1V389h-1zM575 379h1V385h-1zM576 374h1V381h-1zM577 369h1V376h-1zM578 364h1V371h-1zM579 359h1V366h-1zM580 355h1V361h-1zM581 350h1V357h-1zM582 346h1V352h-1zM583 342h1V348h-1zM592 312h1V320h-1zM593 306h1V314h-1zM594 299h1V307h-1zM595 294h1V301h-1zM596 289h1V296h-1zM597 283h1V291h-1zM598 278h1V285h-1zM599 269h1V280h-1zM600 261h1V271h-1zM601 255h1V263h-1zM602 250h1V256h-1zM603 244h1V252h-1zM604 238h1V246h-1zM605 232h1V240h-1zM606 226h1V234h-1zM607 222h1V228h-1zM608 217h1V224h-1z"/><path fill="#5c005c" d="M464 185h1V203h-1zM465 201h1V219h-1zM527 239h1V276h-1zM528 275h1V312h-1zM529 311h1V357h-1zM530 355h1V409h-1zM531 407h1V462h-1zM532 460h1V515h-1zM533 513h1V555h-1zM534 553h1V582h-1zM535 580h1V601h-1zM548 518h1V535h-1z"/>
<g shape-rendering="geometricPrecision"><path d="M1.5 172.5H13.5L19.5 180.5L13.5 188.5H1.5L0.5 187.5V173.5Z" fill="#000" stroke="#e000e0" stroke-width="1"/><path d="M1.5 242.5H13.5L19.5 250.5L13.5 258.5H1.5L0.5 257.5V243.5Z" fill="#00a800" stroke="#00a800" stroke-width="1"/><path d="M1.5 258.8H13.8L19.8 251" fill="none" stroke="#000" stroke-width="1.2"/><path d="M0 242.5H13" stroke="#b8b8b8" stroke-width="1"/><path d="M1.5 416.5H13.5L19.5 424.5L13.5 432.5H1.5L0.5 431.5V417.5Z" fill="#000" stroke="#00e0e0" stroke-width="1"/><path d="M1.5 480.5H13.5L19.5 488.5L13.5 496.5H1.5L0.5 495.5V481.5Z" fill="#000" stroke="#f0f000" stroke-width="1"/><path d="M21 30.5L27 24H37L38 25V36L37 37H27Z" fill="#ff9a00" shape-rendering="geometricPrecision"/><rect x="27" y="25" width="10" height="2" fill="#000"/><rect x="31" y="25" width="2" height="11" fill="#000"/><path d="M146 5H152L153 6V15L152 16H146L145 15V6Z" fill="#ff9a00" shape-rendering="crispEdges"/><rect x="146" y="6" width="6" height="1" fill="#000" shape-rendering="crispEdges"/><rect x="148" y="6" width="2" height="9" fill="#000" shape-rendering="crispEdges"/><g shape-rendering="crispEdges"><rect x="519" y="1" width="5" height="14" fill="#a09ca4"/><rect x="521" y="3" width="1" height="10" fill="#000"/><rect x="521" y="3" width="1" height="2" fill="#ff9a00"/><rect x="518" y="1" width="1" height="1" fill="#ff9a00"/><rect x="524" y="1" width="1" height="1" fill="#ff9a00"/></g><path d="M516 17H527L521.5 23Z" fill="#ff9a00" shape-rendering="geometricPrecision"/><path d="M1010 521.5L1016 516V527Z" fill="#00e8e8" shape-rendering="geometricPrecision"/><rect x="1016" y="521" width="5" height="1" fill="#00e8e8"/><g shape-rendering="crispEdges" fill="#f0f000"><rect x="7" y="483" width="2" height="11"/><rect x="5" y="484" width="2" height="1"/><rect x="6" y="483" width="1" height="1"/></g><rect x="20.5" y="670.5" width="554" height="20" rx="5" ry="5" fill="#000" stroke="#e0e0e0" stroke-width="1"/><rect x="582.5" y="670.5" width="147" height="37" rx="5" ry="5" fill="#000" stroke="#e0e0e0" stroke-width="1"/><rect x="737.5" y="670.5" width="106" height="37" rx="5" ry="5" fill="#000" stroke="#e0e0e0" stroke-width="1"/><rect x="851.5" y="670.5" width="170" height="37" rx="5" ry="5" fill="#000" stroke="#e0e0e0" stroke-width="1"/><rect x="26" y="673" width="25" height="16" rx="8.0" ry="8.0" fill="#ffff00"/><g shape-rendering="crispEdges" fill="#000"><rect x="38" y="675" width="2" height="11"/><rect x="36" y="676" width="2" height="1"/><rect x="37" y="675" width="1" height="1"/></g><rect x="165" y="673" width="25" height="16" rx="8.0" ry="8.0" fill="#00e0e0"/><rect x="304" y="673" width="25" height="16" rx="8.0" ry="8.0" fill="#a000b0"/><rect x="443" y="673" width="25" height="16" rx="8.0" ry="8.0" fill="#00a800"/><rect x="882" y="674" width="25" height="15" rx="7.5" ry="7.5" fill="#00e0e0"/><path d="M920 676.5H925.5V685.5H932" fill="none" stroke="#fff" stroke-width="1.6"/><path d="M588 691H598L599 692V703L598 704H588L587 703V692Z" fill="#ff9a00" shape-rendering="crispEdges"/><rect x="588" y="692" width="10" height="2" fill="#000" shape-rendering="crispEdges"/><rect x="592" y="692" width="2" height="11" fill="#000" shape-rendering="crispEdges"/><path d="M600 697.5H605" stroke="#ff9a00" stroke-width="1.2"/><path d="M604.5 693.8L609.5 697.5L604.5 701Z" fill="#ff9a00"/><path d="M610 693.8H621.2L615.6 700.3Z" fill="#ff9a00"/><rect x="909.5" y="729.5" width="112" height="36" rx="5" ry="5" fill="#000" stroke="#e0e0e0" stroke-width="1"/></g>
</svg>
<div class="a" style="left:-1px;top:-1px;color:#0a0a0a;font-family:'Liberation Serif',serif;font-size:21px;line-height:21px;font-weight:700;letter-spacing:-0.6px">Tek</div><div class="a" style="left:34.6px;top:0.9px;color:#ffffff;font-size:16px;line-height:16px;letter-spacing:1.2px">Run</div><div class="a" style="left:925.0px;top:0.7px;color:#ffffff;font-size:16px;line-height:16px;letter-spacing:0.75px">Trig?</div><div class="a" style="left:3.5px;top:174px;color:#e000e0;font-size:16px;line-height:16px">3</div><div class="a" style="left:3.5px;top:244px;color:#000;font-size:16px;line-height:16px">4</div><div class="a" style="left:3.5px;top:418px;color:#00e0e0;font-size:16px;line-height:16px">2</div><div class="a" style="left:173px;top:674px;color:#000;font-size:16px;line-height:16px">2</div><div class="a" style="left:312px;top:674px;color:#000;font-size:16px;line-height:16px">3</div><div class="a" style="left:451px;top:674px;color:#000;font-size:16px;line-height:16px">4</div><div class="a" style="left:67.8px;top:674.1px;color:#ffff00;font-size:16px;line-height:16px;letter-spacing:1.23px">500mV Ω</div><div class="a" style="left:206.8px;top:674.1px;color:#00e0e0;font-size:16px;line-height:16px;letter-spacing:1.23px">500mV Ω</div><div class="a" style="left:345.8px;top:674.1px;color:#b000c0;font-size:16px;line-height:16px;letter-spacing:1.23px">500mV Ω</div><div class="a" style="left:484.6px;top:674.0px;color:#00b000;font-size:16px;line-height:16px;letter-spacing:1.0px">1.00 V</div><div class="a" style="left:588.0px;top:674.2px;color:#ffffff;font-size:16px;line-height:16px;letter-spacing:1.07px">400ns</div><div class="a" style="left:621.6px;top:692.0px;color:#ff9a00;font-size:16px;line-height:16px;letter-spacing:1.17px">310.604µs</div><div class="a" style="left:742.8px;top:674.0px;color:#ffffff;font-size:16px;line-height:16px;letter-spacing:0.81px">2.50GS/s</div><div class="a" style="left:743.0px;top:692.0px;color:#ffffff;font-size:16px;line-height:16px;letter-spacing:1.42px">1M points</div><div class="a" style="left:890px;top:674px;color:#000;font-size:16px;line-height:16px">2</div><div class="a" style="left:949.0px;top:674.0px;color:#ffffff;font-size:16px;line-height:16px;letter-spacing:1.2px">−750mV</div><div class="a" style="left:915.6px;top:734.2px;color:#ffffff;font-size:16px;line-height:16px;letter-spacing:0.75px">18 Oct  2021</div><div class="a" style="left:915.0px;top:750.2px;color:#ffffff;font-size:16px;line-height:16px;letter-spacing:1.17px">08:00:27</div><div class="btn" style="left:20px"></div><div class="btn" style="left:138px"></div><div class="btn" style="left:256px"></div><div class="btn" style="left:374px"></div><div class="btn" style="left:492px"></div><div class="btn" style="left:728px"></div><div class="a k" style="left:57.6px;top:726.0px;color:#000;font-size:16px;line-height:16px;letter-spacing:1.47px">Type</div><div class="a" style="left:57px;top:742px;width:40px;height:16px;background:#c8cce8"></div><div class="a k" style="left:57.0px;top:743.0px;color:#000;font-size:16px;line-height:16px;letter-spacing:0.33px">Edge</div><div class="a k" style="left:167.7px;top:726.0px;color:#000;font-size:16px;line-height:16px;letter-spacing:0.66px">Source</div><div class="a" style="left:183px;top:742px;width:25px;height:16px;border-radius:8px;background:#00e0e0"></div><div class="a" style="left:191px;top:743px;color:#000;font-size:16px;line-height:16px">2</div><div class="a k" style="left:276.3px;top:726.0px;color:#000;font-size:16px;line-height:16px;letter-spacing:1.61px">Coupling</div><div class="a" style="left:302px;top:742px;width:23px;height:16px;background:#c8cce8"></div><div class="a k" style="left:301.5px;top:743.0px;color:#000;font-size:16px;line-height:16px;letter-spacing:0.5px">DC</div><div class="a k" style="left:409.0px;top:717.3px;color:#000;font-size:16px;line-height:16px;letter-spacing:0.9px">Slope</div><div class="a" style="left:435px;top:735px;width:48px;height:33px;border-radius:3px;background:#c8cce8"></div><div class="a k" style="left:529.0px;top:726.0px;color:#000;font-size:16px;line-height:16px;letter-spacing:0.7px">Level</div><div class="a" style="left:516px;top:742px;width:67px;height:16px;background:#c8cce8"></div><div class="a k" style="left:516.0px;top:743.0px;color:#000;font-size:16px;line-height:16px;letter-spacing:1.2px">−750mV</div><div class="a k" style="left:763.8px;top:717.0px;color:#000;font-size:16px;line-height:16px;letter-spacing:0.73px">Mode</div><div class="a" style="left:756px;top:733px;width:58px;height:16px;background:#c8cce8"></div><div class="a k" style="left:756.7px;top:733.8px;color:#000;font-size:16px;line-height:16px;letter-spacing:1.06px">Normal</div><div class="a k" style="left:748.0px;top:750.5px;color:#000;font-size:16px;line-height:16px;letter-spacing:1.2px">&amp; Holdoff</div><svg class="a" style="left:0;top:0" width="1024" height="768"><path d="M382 762.5H396.8L407.4 741.5H421.6" fill="none" stroke="#000" stroke-width="1.3"/><path d="M397 755.5H404.8V747.5Z" fill="#000"/><path d="M439 741.5H453.8L464.6 762.5H478.8" fill="none" stroke="#000" stroke-width="1.3"/><path d="M453.8 748.3H461V755.5Z" fill="#000"/></svg>
</body></html>
